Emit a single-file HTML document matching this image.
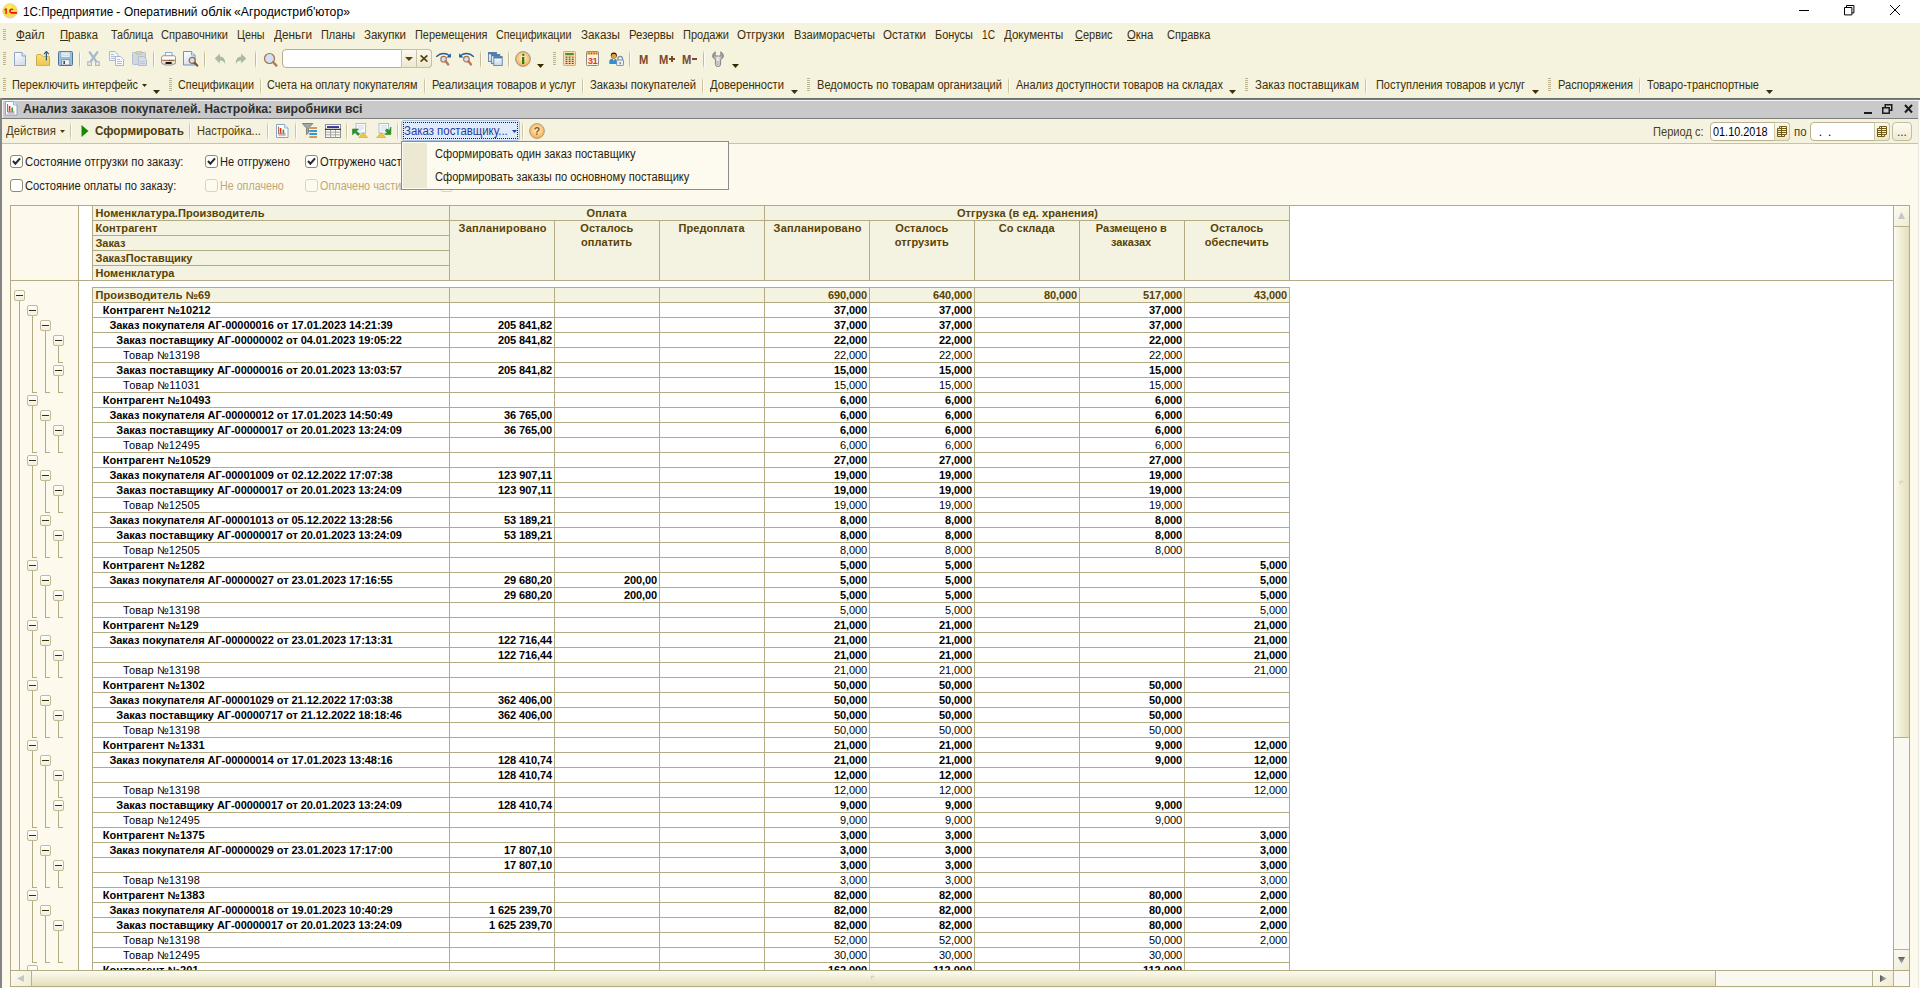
<!DOCTYPE html>
<html><head><meta charset="utf-8"><title>1C</title>
<style>
html,body{margin:0;padding:0}
body{width:1920px;height:988px;position:relative;overflow:hidden;background:#fdf9ec;font-family:"Liberation Sans",sans-serif;font-size:11px;line-height:14px;color:#000}
body div,body span,body svg{position:absolute}
.t{white-space:pre;height:14px}
.b{font-weight:700}
u{text-decoration:none;border-bottom:1px solid currentColor;display:inline-block;height:13px;line-height:16px;vertical-align:top}

</style></head>
<body>
<div style="left:0px;top:0px;width:1920px;height:23px;background:#ffffff;"></div>
<span class="t" style="top:4px;left:22.8px;font-size:12px;line-height:16px;transform:scaleX(0.9747);transform-origin:0 0;">1С:Предприятие</span>
<span class="t" style="top:4px;left:116.1px;font-size:12px;line-height:16px;transform:scaleX(1.1000);transform-origin:0 0;">-</span>
<span class="t" style="top:4px;left:123.8px;font-size:12px;line-height:16px;transform:scaleX(0.9905);transform-origin:0 0;">Оперативний</span>
<span class="t" style="top:4px;left:200.8px;font-size:12px;line-height:16px;transform:scaleX(1.0810);transform-origin:0 0;">облік</span>
<span class="t" style="top:4px;left:233.8px;font-size:12px;line-height:16px;transform:scaleX(1.0175);transform-origin:0 0;">«Агродистриб'ютор»</span>
<svg style="left:1790px;top:0;width:120px;height:23px" viewBox="0 0 120 23" fill="none" stroke="#000" stroke-width="1"><path d="M9 10.5h10"/><path d="M54.5 7.500h7.400v7.400h-7.400z"/><path d="M56.500 7.500v-2h7.400v7.400h-2"/><path d="M100 5l10 10M110 5l-10 10"/></svg>
<div style="left:0px;top:23px;width:1920px;height:75px;background:#f5f2dd;"></div>
<div style="left:3px;top:29px;width:3px;height:11px;background:repeating-linear-gradient(to bottom,#bdb58e 0,#bdb58e 1px,transparent 1px,transparent 2px)"></div>
<span class="t" style="top:27px;left:16.4px;font-size:12px;line-height:16px;color:#3a2f0c;transform:scaleX(0.9656);transform-origin:0 0;"><u>Ф</u>айл</span>
<span class="t" style="top:27px;left:59.9px;font-size:12px;line-height:16px;color:#3a2f0c;transform:scaleX(0.9372);transform-origin:0 0;"><u>П</u>равка</span>
<span class="t" style="top:27px;left:110.6px;font-size:12px;line-height:16px;color:#3a2f0c;transform:scaleX(0.8988);transform-origin:0 0;">Таблица</span>
<span class="t" style="top:27px;left:160.9px;font-size:12px;line-height:16px;color:#3a2f0c;transform:scaleX(0.9216);transform-origin:0 0;">Справочники</span>
<span class="t" style="top:27px;left:237.4px;font-size:12px;line-height:16px;color:#3a2f0c;transform:scaleX(0.8925);transform-origin:0 0;">Цены</span>
<span class="t" style="top:27px;left:273.9px;font-size:12px;line-height:16px;color:#3a2f0c;transform:scaleX(0.9802);transform-origin:0 0;">Деньги</span>
<span class="t" style="top:27px;left:320.9px;font-size:12px;line-height:16px;color:#3a2f0c;transform:scaleX(0.9052);transform-origin:0 0;">Планы</span>
<span class="t" style="top:27px;left:363.9px;font-size:12px;line-height:16px;color:#3a2f0c;transform:scaleX(0.9597);transform-origin:0 0;">Закупки</span>
<span class="t" style="top:27px;left:415.4px;font-size:12px;line-height:16px;color:#3a2f0c;transform:scaleX(0.9084);transform-origin:0 0;">Перемещения</span>
<span class="t" style="top:27px;left:496.4px;font-size:12px;line-height:16px;color:#3a2f0c;transform:scaleX(0.8938);transform-origin:0 0;">Спецификации</span>
<span class="t" style="top:27px;left:580.9px;font-size:12px;line-height:16px;color:#3a2f0c;transform:scaleX(0.9723);transform-origin:0 0;">Заказы</span>
<span class="t" style="top:27px;left:628.9px;font-size:12px;line-height:16px;color:#3a2f0c;transform:scaleX(0.9452);transform-origin:0 0;">Резервы</span>
<span class="t" style="top:27px;left:682.9px;font-size:12px;line-height:16px;color:#3a2f0c;transform:scaleX(0.9177);transform-origin:0 0;">Продажи</span>
<span class="t" style="top:27px;left:737.4px;font-size:12px;line-height:16px;color:#3a2f0c;transform:scaleX(0.9654);transform-origin:0 0;">Отгрузки</span>
<span class="t" style="top:27px;left:793.9px;font-size:12px;line-height:16px;color:#3a2f0c;transform:scaleX(0.9239);transform-origin:0 0;">Взаиморасчеты</span>
<span class="t" style="top:27px;left:882.9px;font-size:12px;line-height:16px;color:#3a2f0c;transform:scaleX(0.9649);transform-origin:0 0;">Остатки</span>
<span class="t" style="top:27px;left:935.2px;font-size:12px;line-height:16px;color:#3a2f0c;transform:scaleX(0.9095);transform-origin:0 0;">Бонусы</span>
<span class="t" style="top:27px;left:982.4px;font-size:12px;line-height:16px;color:#3a2f0c;transform:scaleX(0.8473);transform-origin:0 0;">1С</span>
<span class="t" style="top:27px;left:1003.7px;font-size:12px;line-height:16px;color:#3a2f0c;transform:scaleX(0.9602);transform-origin:0 0;">Документы</span>
<span class="t" style="top:27px;left:1074.6px;font-size:12px;line-height:16px;color:#3a2f0c;transform:scaleX(0.9150);transform-origin:0 0;"><u>С</u>ервис</span>
<span class="t" style="top:27px;left:1126.6px;font-size:12px;line-height:16px;color:#3a2f0c;transform:scaleX(0.9430);transform-origin:0 0;"><u>О</u>кна</span>
<span class="t" style="top:27px;left:1167.4px;font-size:12px;line-height:16px;color:#3a2f0c;transform:scaleX(0.9240);transform-origin:0 0;">Сп<u>р</u>авка</span>
<div style="left:3px;top:78px;width:3px;height:13px;background:repeating-linear-gradient(to bottom,#bdb58e 0,#bdb58e 1px,transparent 1px,transparent 2px)"></div>
<span class="t" style="top:77px;left:12.4px;font-size:12px;line-height:16px;color:#3a2f0c;transform:scaleX(0.9050);transform-origin:0 0;">Переключить интерфейс</span>
<svg style="left:142px;top:84px;width:5px;height:3px" viewBox="0 0 5 3"><path d="M0 0h5l-2.5 3z" fill="#3a2f0c"/></svg>
<svg style="left:153px;top:90px;width:7px;height:4px" viewBox="0 0 7 4"><path d="M0 0h7l-3.5 4z" fill="#3a2f0c"/></svg>
<div style="left:169px;top:78px;width:3px;height:13px;background:repeating-linear-gradient(to bottom,#bdb58e 0,#bdb58e 1px,transparent 1px,transparent 2px)"></div>
<span class="t" style="top:77px;left:177.9px;font-size:12px;line-height:16px;color:#3a2f0c;transform:scaleX(0.8997);transform-origin:0 0;">Спецификации</span>
<div style="left:260px;top:77px;width:1px;height:18px;background:linear-gradient(to bottom,rgba(196,188,150,0),#cbc4a0 25%,#cbc4a0 75%,rgba(196,188,150,0))"></div>
<div style="left:261px;top:77px;width:1px;height:18px;background:linear-gradient(to bottom,rgba(255,255,255,0),#fdfcf6 25%,#fdfcf6 75%,rgba(255,255,255,0))"></div>
<span class="t" style="top:77px;left:267.4px;font-size:12px;line-height:16px;color:#3a2f0c;transform:scaleX(0.9095);transform-origin:0 0;">Счета на оплату покупателям</span>
<div style="left:424px;top:77px;width:1px;height:18px;background:linear-gradient(to bottom,rgba(196,188,150,0),#cbc4a0 25%,#cbc4a0 75%,rgba(196,188,150,0))"></div>
<div style="left:425px;top:77px;width:1px;height:18px;background:linear-gradient(to bottom,rgba(255,255,255,0),#fdfcf6 25%,#fdfcf6 75%,rgba(255,255,255,0))"></div>
<span class="t" style="top:77px;left:431.9px;font-size:12px;line-height:16px;color:#3a2f0c;transform:scaleX(0.9148);transform-origin:0 0;">Реализация товаров и услуг</span>
<div style="left:582px;top:77px;width:1px;height:18px;background:linear-gradient(to bottom,rgba(196,188,150,0),#cbc4a0 25%,#cbc4a0 75%,rgba(196,188,150,0))"></div>
<div style="left:583px;top:77px;width:1px;height:18px;background:linear-gradient(to bottom,rgba(255,255,255,0),#fdfcf6 25%,#fdfcf6 75%,rgba(255,255,255,0))"></div>
<span class="t" style="top:77px;left:589.9px;font-size:12px;line-height:16px;color:#3a2f0c;transform:scaleX(0.9387);transform-origin:0 0;">Заказы покупателей</span>
<div style="left:702px;top:77px;width:1px;height:18px;background:linear-gradient(to bottom,rgba(196,188,150,0),#cbc4a0 25%,#cbc4a0 75%,rgba(196,188,150,0))"></div>
<div style="left:703px;top:77px;width:1px;height:18px;background:linear-gradient(to bottom,rgba(255,255,255,0),#fdfcf6 25%,#fdfcf6 75%,rgba(255,255,255,0))"></div>
<span class="t" style="top:77px;left:709.9px;font-size:12px;line-height:16px;color:#3a2f0c;transform:scaleX(0.9328);transform-origin:0 0;">Доверенности</span>
<svg style="left:791px;top:90px;width:7px;height:4px" viewBox="0 0 7 4"><path d="M0 0h7l-3.5 4z" fill="#3a2f0c"/></svg>
<div style="left:807px;top:78px;width:3px;height:13px;background:repeating-linear-gradient(to bottom,#bdb58e 0,#bdb58e 1px,transparent 1px,transparent 2px)"></div>
<span class="t" style="top:77px;left:816.9px;font-size:12px;line-height:16px;color:#3a2f0c;transform:scaleX(0.9231);transform-origin:0 0;">Ведомость по товарам организаций</span>
<div style="left:1008px;top:77px;width:1px;height:18px;background:linear-gradient(to bottom,rgba(196,188,150,0),#cbc4a0 25%,#cbc4a0 75%,rgba(196,188,150,0))"></div>
<div style="left:1009px;top:77px;width:1px;height:18px;background:linear-gradient(to bottom,rgba(255,255,255,0),#fdfcf6 25%,#fdfcf6 75%,rgba(255,255,255,0))"></div>
<span class="t" style="top:77px;left:1015.9px;font-size:12px;line-height:16px;color:#3a2f0c;transform:scaleX(0.9164);transform-origin:0 0;">Анализ доступности товаров на складах</span>
<svg style="left:1229px;top:90px;width:7px;height:4px" viewBox="0 0 7 4"><path d="M0 0h7l-3.5 4z" fill="#3a2f0c"/></svg>
<div style="left:1245px;top:78px;width:3px;height:13px;background:repeating-linear-gradient(to bottom,#bdb58e 0,#bdb58e 1px,transparent 1px,transparent 2px)"></div>
<span class="t" style="top:77px;left:1254.9px;font-size:12px;line-height:16px;color:#3a2f0c;transform:scaleX(0.9506);transform-origin:0 0;">Заказ поставщикам</span>
<div style="left:1365px;top:77px;width:1px;height:18px;background:linear-gradient(to bottom,rgba(196,188,150,0),#cbc4a0 25%,#cbc4a0 75%,rgba(196,188,150,0))"></div>
<div style="left:1366px;top:77px;width:1px;height:18px;background:linear-gradient(to bottom,rgba(255,255,255,0),#fdfcf6 25%,#fdfcf6 75%,rgba(255,255,255,0))"></div>
<span class="t" style="top:77px;left:1375.9px;font-size:12px;line-height:16px;color:#3a2f0c;transform:scaleX(0.9110);transform-origin:0 0;">Поступления товаров и услуг</span>
<svg style="left:1532px;top:90px;width:7px;height:4px" viewBox="0 0 7 4"><path d="M0 0h7l-3.5 4z" fill="#3a2f0c"/></svg>
<div style="left:1548px;top:78px;width:3px;height:13px;background:repeating-linear-gradient(to bottom,#bdb58e 0,#bdb58e 1px,transparent 1px,transparent 2px)"></div>
<span class="t" style="top:77px;left:1557.9px;font-size:12px;line-height:16px;color:#3a2f0c;transform:scaleX(0.9256);transform-origin:0 0;">Распоряжения</span>
<div style="left:1639px;top:77px;width:1px;height:18px;background:linear-gradient(to bottom,rgba(196,188,150,0),#cbc4a0 25%,#cbc4a0 75%,rgba(196,188,150,0))"></div>
<div style="left:1640px;top:77px;width:1px;height:18px;background:linear-gradient(to bottom,rgba(255,255,255,0),#fdfcf6 25%,#fdfcf6 75%,rgba(255,255,255,0))"></div>
<span class="t" style="top:77px;left:1646.9px;font-size:12px;line-height:16px;color:#3a2f0c;transform:scaleX(0.9194);transform-origin:0 0;">Товаро-транспортные</span>
<svg style="left:1766px;top:90px;width:7px;height:4px" viewBox="0 0 7 4"><path d="M0 0h7l-3.5 4z" fill="#3a2f0c"/></svg>
<div style="left:0px;top:98px;width:1920px;height:1px;background:#6c6c6c;"></div>
<div style="left:0px;top:99px;width:1920px;height:1px;background:#7e7e7e;"></div>
<div style="left:0px;top:100px;width:1920px;height:1px;background:#f4f4f4;"></div>
<div style="left:0px;top:101px;width:1918px;height:17px;background:#c9c9c9;"></div>
<div style="left:0px;top:118px;width:1918px;height:1px;background:#7d7d7d;"></div>
<div style="left:0px;top:119px;width:1918px;height:24px;background:#f5f2e0;"></div>
<div style="left:0px;top:143px;width:1918px;height:1px;background:#c9c29c;"></div>
<div style="left:0px;top:98px;width:2px;height:890px;background:#858585;"></div>
<div style="left:2px;top:101px;width:1px;height:17px;background:#f4f4f4;"></div>
<div style="left:1918px;top:100px;width:1px;height:888px;background:#e9e9e4;"></div>
<div style="left:1919px;top:100px;width:1px;height:888px;background:#fbfbf8;"></div>
<div style="left:2px;top:987px;width:1916px;height:1px;background:#fdf9ec;"></div>
<span class="t b" style="top:101px;left:22.9px;font-size:12px;line-height:16px;color:#2e2e2e;transform:scaleX(1.0195);transform-origin:0 0;">Анализ заказов покупателей. Настройка: виробники всі</span>
<svg style="left:1860px;top:101px;width:58px;height:17px" viewBox="0 0 58 17" fill="none" stroke="#1a1a1a"><path d="M4 12h8" stroke-width="2"/><path d="M22.75 6.75h6.5v5.5h-6.5z M25.25 6v-2.25h6.5v5.5h-2" stroke-width="1.5"/><path d="M45 4l7 7.5M52 4l-7 7.5" stroke-width="2"/></svg>
<span class="t" style="top:123px;left:6.2px;font-size:12px;line-height:16px;color:#4d3e10;transform:scaleX(0.9491);transform-origin:0 0;">Действия</span>
<svg style="left:60px;top:130px;width:5px;height:3px" viewBox="0 0 5 3"><path d="M0 0h5l-2.5 3z" fill="#4d3e10"/></svg>
<div style="left:70px;top:121px;width:1px;height:20px;background:linear-gradient(to bottom,rgba(196,188,150,0),#cdc6a4 25%,#cdc6a4 75%,rgba(196,188,150,0))"></div>
<div style="left:71px;top:121px;width:1px;height:20px;background:linear-gradient(to bottom,rgba(255,255,255,0),#fffefa 25%,#fffefa 75%,rgba(255,255,255,0))"></div>
<svg style="left:81px;top:124px;width:8px;height:14px" viewBox="0 0 8 14"><path d="M0.5 1v12l7-6z" fill="#168a00"/></svg>
<span class="t b" style="top:123px;left:94.6px;font-size:12px;line-height:16px;color:#4d3e10;transform:scaleX(0.9724);transform-origin:0 0;">Сформировать</span>
<div style="left:189px;top:121px;width:1px;height:20px;background:linear-gradient(to bottom,rgba(196,188,150,0),#cdc6a4 25%,#cdc6a4 75%,rgba(196,188,150,0))"></div>
<div style="left:190px;top:121px;width:1px;height:20px;background:linear-gradient(to bottom,rgba(255,255,255,0),#fffefa 25%,#fffefa 75%,rgba(255,255,255,0))"></div>
<span class="t" style="top:123px;left:197.1px;font-size:12px;line-height:16px;color:#4d3e10;transform:scaleX(0.9236);transform-origin:0 0;">Настройка...</span>
<div style="left:267px;top:121px;width:1px;height:20px;background:linear-gradient(to bottom,rgba(196,188,150,0),#cdc6a4 25%,#cdc6a4 75%,rgba(196,188,150,0))"></div>
<div style="left:268px;top:121px;width:1px;height:20px;background:linear-gradient(to bottom,rgba(255,255,255,0),#fffefa 25%,#fffefa 75%,rgba(255,255,255,0))"></div>
<div style="left:295px;top:121px;width:1px;height:20px;background:linear-gradient(to bottom,rgba(196,188,150,0),#cdc6a4 25%,#cdc6a4 75%,rgba(196,188,150,0))"></div>
<div style="left:296px;top:121px;width:1px;height:20px;background:linear-gradient(to bottom,rgba(255,255,255,0),#fffefa 25%,#fffefa 75%,rgba(255,255,255,0))"></div>
<div style="left:346px;top:121px;width:1px;height:20px;background:linear-gradient(to bottom,rgba(196,188,150,0),#cdc6a4 25%,#cdc6a4 75%,rgba(196,188,150,0))"></div>
<div style="left:347px;top:121px;width:1px;height:20px;background:linear-gradient(to bottom,rgba(255,255,255,0),#fffefa 25%,#fffefa 75%,rgba(255,255,255,0))"></div>
<div style="left:397px;top:121px;width:1px;height:20px;background:linear-gradient(to bottom,rgba(196,188,150,0),#cdc6a4 25%,#cdc6a4 75%,rgba(196,188,150,0))"></div>
<div style="left:398px;top:121px;width:1px;height:20px;background:linear-gradient(to bottom,rgba(255,255,255,0),#fffefa 25%,#fffefa 75%,rgba(255,255,255,0))"></div>
<div style="left:522px;top:121px;width:1px;height:20px;background:linear-gradient(to bottom,rgba(196,188,150,0),#cdc6a4 25%,#cdc6a4 75%,rgba(196,188,150,0))"></div>
<div style="left:523px;top:121px;width:1px;height:20px;background:linear-gradient(to bottom,rgba(255,255,255,0),#fffefa 25%,#fffefa 75%,rgba(255,255,255,0))"></div>
<div style="left:401px;top:120px;width:119px;height:21px;border:1px solid #aac4e8;border-radius:3px;box-sizing:border-box;background:#dfeafa"></div>
<div style="left:403px;top:122px;width:115px;height:17px;border:1px dotted #1a1a3a;box-sizing:border-box"></div>
<span class="t" style="top:123px;left:403.9px;font-size:12px;line-height:16px;color:#2a3c9c;transform:scaleX(0.9509);transform-origin:0 0;">Заказ поставщику...</span>
<svg style="left:512px;top:130px;width:5px;height:3px" viewBox="0 0 5 3"><path d="M0 0h5l-2.5 3z" fill="#2a3c9c"/></svg>
<span class="t" style="top:124px;left:1653.0px;font-size:12px;line-height:16px;color:#4d3e10;transform:scaleX(0.9239);transform-origin:0 0;">Период с:</span>
<div style="left:1710px;top:122px;width:80px;height:19px;border:1px solid #b9b18c;border-radius:4px;box-sizing:border-box;background:#fff"></div>
<div style="left:1774px;top:122px;width:16px;height:19px;border:1px solid #c8c19e;border-left-color:#cfc9a8;border-radius:0 4px 4px 0;box-sizing:border-box;background:linear-gradient(#fbf9ee,#ece7cd)"></div>
<svg style="left:1777px;top:126px;width:10px;height:11px" viewBox="0 0 10 11" fill="none" stroke="#6e5a14" stroke-width="1"><path d="M2.500 0.500h7v8h-2v2h-7v-8h2z M0.500 4.500h9M0.500 6.500h9M0.500 8.500h7M2.500 2.500h7 M4.500 0.500v10"/></svg>
<span class="t" style="top:124px;left:1713.3px;font-size:12px;line-height:16px;transform:scaleX(0.9074);transform-origin:0 0;">01.10.2018</span>
<span class="t" style="top:124px;left:1793.5px;font-size:12px;line-height:16px;color:#4d3e10;transform:scaleX(0.9566);transform-origin:0 0;">по</span>
<div style="left:1810px;top:122px;width:80px;height:19px;border:1px solid #b9b18c;border-radius:4px;box-sizing:border-box;background:#fff"></div>
<div style="left:1874px;top:122px;width:16px;height:19px;border:1px solid #c8c19e;border-left-color:#cfc9a8;border-radius:0 4px 4px 0;box-sizing:border-box;background:linear-gradient(#fbf9ee,#ece7cd)"></div>
<svg style="left:1877px;top:126px;width:10px;height:11px" viewBox="0 0 10 11" fill="none" stroke="#6e5a14" stroke-width="1"><path d="M2.500 0.500h7v8h-2v2h-7v-8h2z M0.500 4.500h9M0.500 6.500h9M0.500 8.500h7M2.500 2.500h7 M4.500 0.500v10"/></svg>
<span class="t" style="top:124px;left:1818.7px;font-size:12px;line-height:16px;">.</span>
<span class="t" style="top:124px;left:1827.9px;font-size:12px;line-height:16px;">.</span>
<div style="left:1892px;top:122px;width:20px;height:19px;border:1px solid #c4bd9a;border-radius:4px;box-sizing:border-box;background:linear-gradient(#fdfcf4,#eeead2)"></div>
<span class="t" style="top:124px;left:1896.9px;font-size:12px;line-height:16px;color:#4d3e10;">...</span>
<div style="left:10px;top:155px;width:13px;height:13px;border:1px solid #8f8a76;border-radius:3px;box-sizing:border-box;background:#fff"></div>
<svg style="left:12px;top:157px;width:9px;height:9px" viewBox="0 0 9 9"><path d="M1 4l2.400 2.700L8 1.400" fill="none" stroke="#2a2a2a" stroke-width="2.100"/></svg>
<span class="t" style="top:154px;left:24.6px;font-size:12px;line-height:16px;color:#1c1c1c;transform:scaleX(0.9420);transform-origin:0 0;">Состояние отгрузки по заказу:</span>
<div style="left:205px;top:155px;width:13px;height:13px;border:1px solid #8f8a76;border-radius:3px;box-sizing:border-box;background:#fff"></div>
<svg style="left:207px;top:157px;width:9px;height:9px" viewBox="0 0 9 9"><path d="M1 4l2.400 2.700L8 1.400" fill="none" stroke="#2a2a2a" stroke-width="2.100"/></svg>
<span class="t" style="top:154px;left:220.1px;font-size:12px;line-height:16px;color:#1c1c1c;transform:scaleX(0.9228);transform-origin:0 0;">Не отгружено</span>
<div style="left:305px;top:155px;width:13px;height:13px;border:1px solid #8f8a76;border-radius:3px;box-sizing:border-box;background:#fff"></div>
<svg style="left:307px;top:157px;width:9px;height:9px" viewBox="0 0 9 9"><path d="M1 4l2.400 2.700L8 1.400" fill="none" stroke="#2a2a2a" stroke-width="2.100"/></svg>
<span class="t" style="top:154px;left:319.9px;font-size:12px;line-height:16px;color:#1c1c1c;transform:scaleX(0.9306);transform-origin:0 0;">Отгружено частично</span>
<div style="left:10px;top:179px;width:13px;height:13px;border:1px solid #8f8a76;border-radius:3px;box-sizing:border-box;background:#fff"></div>
<span class="t" style="top:178px;left:24.6px;font-size:12px;line-height:16px;color:#1c1c1c;transform:scaleX(0.9300);transform-origin:0 0;">Состояние оплаты по заказу:</span>
<div style="left:205px;top:179px;width:13px;height:13px;border:1px solid #d9d5c4;border-radius:3px;box-sizing:border-box;background:#fdfaee"></div>
<span class="t" style="top:178px;left:220.1px;font-size:12px;line-height:16px;color:#bda878;transform:scaleX(0.8925);transform-origin:0 0;">Не оплачено</span>
<div style="left:305px;top:179px;width:13px;height:13px;border:1px solid #d9d5c4;border-radius:3px;box-sizing:border-box;background:#fdfaee"></div>
<span class="t" style="top:178px;left:319.9px;font-size:12px;line-height:16px;color:#bda878;transform:scaleX(0.9042);transform-origin:0 0;">Оплачено частично</span>
<div style="left:440px;top:179px;width:13px;height:13px;border:1px solid #d9d5c4;border-radius:3px;box-sizing:border-box;background:#fdfaee"></div>
<div style="left:10px;top:205px;width:1900px;height:782px;border:1px solid #b3ab84;box-sizing:border-box;background:#fff"></div>
<div style="left:11px;top:206px;width:67px;height:764px;background:#fdf9ec;"></div>
<div style="left:78px;top:206px;width:1px;height:764px;background:#b3ab84;"></div>
<div style="left:11px;top:280px;width:1882px;height:1px;background:#b3ab84;"></div>
<div style="left:92px;top:205px;width:1198px;height:76px;background:#f4f2e0;"></div>
<div style="left:92px;top:205px;width:1198px;height:1px;background:#b3ab84;"></div>
<div style="left:92px;top:220px;width:1198px;height:1px;background:#b3ab84;"></div>
<div style="left:92px;top:235px;width:357px;height:1px;background:#b3ab84;"></div>
<div style="left:92px;top:250px;width:357px;height:1px;background:#b3ab84;"></div>
<div style="left:92px;top:265px;width:357px;height:1px;background:#b3ab84;"></div>
<div style="left:92px;top:280px;width:1198px;height:1px;background:#b3ab84;"></div>
<div style="left:92px;top:205px;width:1px;height:76px;background:#b3ab84;"></div>
<div style="left:449px;top:205px;width:1px;height:76px;background:#b3ab84;"></div>
<div style="left:764px;top:205px;width:1px;height:76px;background:#b3ab84;"></div>
<div style="left:1289px;top:205px;width:1px;height:76px;background:#b3ab84;"></div>
<div style="left:554px;top:220px;width:1px;height:61px;background:#b3ab84;"></div>
<div style="left:659px;top:220px;width:1px;height:61px;background:#b3ab84;"></div>
<div style="left:869px;top:220px;width:1px;height:61px;background:#b3ab84;"></div>
<div style="left:974px;top:220px;width:1px;height:61px;background:#b3ab84;"></div>
<div style="left:1079px;top:220px;width:1px;height:61px;background:#b3ab84;"></div>
<div style="left:1184px;top:220px;width:1px;height:61px;background:#b3ab84;"></div>
<span class="t b" style="top:206px;left:95.5px;color:#594304;letter-spacing:0.059px;">Номенклатура.Производитель</span>
<span class="t b" style="top:221px;left:95.5px;color:#594304;letter-spacing:0.095px;">Контрагент</span>
<span class="t b" style="top:236px;left:95.5px;color:#594304;letter-spacing:-0.047px;">Заказ</span>
<span class="t b" style="top:251px;left:95.5px;color:#594304;letter-spacing:0.016px;">ЗаказПоставщику</span>
<span class="t b" style="top:266px;left:95.5px;color:#594304;letter-spacing:0.030px;">Номенклатура</span>
<span class="t b" style="top:206px;left:586.6px;color:#594304;letter-spacing:0.031px;">Оплата</span>
<span class="t b" style="top:206px;left:956.9px;color:#594304;letter-spacing:0.075px;">Отгрузка (в ед. хранения)</span>
<span class="t b" style="top:221px;left:458.6px;color:#594304;letter-spacing:0.177px;">Запланировано</span>
<span class="t b" style="top:221px;left:580.3px;color:#594304;letter-spacing:0.064px;">Осталось</span>
<span class="t b" style="top:235px;left:581.1px;color:#594304;letter-spacing:0.027px;">оплатить</span>
<span class="t b" style="top:221px;left:678.6px;color:#594304;letter-spacing:0.030px;">Предоплата</span>
<span class="t b" style="top:221px;left:773.6px;color:#594304;letter-spacing:0.177px;">Запланировано</span>
<span class="t b" style="top:221px;left:895.3px;color:#594304;letter-spacing:0.064px;">Осталось</span>
<span class="t b" style="top:235px;left:894.8px;color:#594304;letter-spacing:0.073px;">отгрузить</span>
<span class="t b" style="top:221px;left:998.7px;color:#594304;letter-spacing:0.035px;">Со склада</span>
<span class="t b" style="top:221px;left:1095.8px;color:#594304;letter-spacing:-0.044px;">Размещено в</span>
<span class="t b" style="top:235px;left:1111.1px;color:#594304;letter-spacing:-0.109px;">заказах</span>
<span class="t b" style="top:221px;left:1210.3px;color:#594304;letter-spacing:0.064px;">Осталось</span>
<span class="t b" style="top:235px;left:1204.8px;color:#594304;letter-spacing:0.061px;">обеспечить</span>
<div style="left:11px;top:281px;width:1882px;height:689px;overflow:hidden">
<div style="left:81px;top:6px;width:1198px;height:16px;background:#f4f2e0;"></div>
<div style="left:81px;top:6px;width:1198px;height:1px;background:#b3ab84;"></div>
<div style="left:81px;top:21px;width:1198px;height:1px;background:#b3ab84;"></div>
<div style="left:81px;top:36px;width:1198px;height:1px;background:#b3ab84;"></div>
<div style="left:81px;top:51px;width:1198px;height:1px;background:#b3ab84;"></div>
<div style="left:81px;top:66px;width:1198px;height:1px;background:#b3ab84;"></div>
<div style="left:81px;top:81px;width:1198px;height:1px;background:#b3ab84;"></div>
<div style="left:81px;top:96px;width:1198px;height:1px;background:#b3ab84;"></div>
<div style="left:81px;top:111px;width:1198px;height:1px;background:#b3ab84;"></div>
<div style="left:81px;top:126px;width:1198px;height:1px;background:#b3ab84;"></div>
<div style="left:81px;top:141px;width:1198px;height:1px;background:#b3ab84;"></div>
<div style="left:81px;top:156px;width:1198px;height:1px;background:#b3ab84;"></div>
<div style="left:81px;top:171px;width:1198px;height:1px;background:#b3ab84;"></div>
<div style="left:81px;top:186px;width:1198px;height:1px;background:#b3ab84;"></div>
<div style="left:81px;top:201px;width:1198px;height:1px;background:#b3ab84;"></div>
<div style="left:81px;top:216px;width:1198px;height:1px;background:#b3ab84;"></div>
<div style="left:81px;top:231px;width:1198px;height:1px;background:#b3ab84;"></div>
<div style="left:81px;top:246px;width:1198px;height:1px;background:#b3ab84;"></div>
<div style="left:81px;top:261px;width:1198px;height:1px;background:#b3ab84;"></div>
<div style="left:81px;top:276px;width:1198px;height:1px;background:#b3ab84;"></div>
<div style="left:81px;top:291px;width:1198px;height:1px;background:#b3ab84;"></div>
<div style="left:81px;top:306px;width:1198px;height:1px;background:#b3ab84;"></div>
<div style="left:81px;top:321px;width:1198px;height:1px;background:#b3ab84;"></div>
<div style="left:81px;top:336px;width:1198px;height:1px;background:#b3ab84;"></div>
<div style="left:81px;top:351px;width:1198px;height:1px;background:#b3ab84;"></div>
<div style="left:81px;top:366px;width:1198px;height:1px;background:#b3ab84;"></div>
<div style="left:81px;top:381px;width:1198px;height:1px;background:#b3ab84;"></div>
<div style="left:81px;top:396px;width:1198px;height:1px;background:#b3ab84;"></div>
<div style="left:81px;top:411px;width:1198px;height:1px;background:#b3ab84;"></div>
<div style="left:81px;top:426px;width:1198px;height:1px;background:#b3ab84;"></div>
<div style="left:81px;top:441px;width:1198px;height:1px;background:#b3ab84;"></div>
<div style="left:81px;top:456px;width:1198px;height:1px;background:#b3ab84;"></div>
<div style="left:81px;top:471px;width:1198px;height:1px;background:#b3ab84;"></div>
<div style="left:81px;top:486px;width:1198px;height:1px;background:#b3ab84;"></div>
<div style="left:81px;top:501px;width:1198px;height:1px;background:#b3ab84;"></div>
<div style="left:81px;top:516px;width:1198px;height:1px;background:#b3ab84;"></div>
<div style="left:81px;top:531px;width:1198px;height:1px;background:#b3ab84;"></div>
<div style="left:81px;top:546px;width:1198px;height:1px;background:#b3ab84;"></div>
<div style="left:81px;top:561px;width:1198px;height:1px;background:#b3ab84;"></div>
<div style="left:81px;top:576px;width:1198px;height:1px;background:#b3ab84;"></div>
<div style="left:81px;top:591px;width:1198px;height:1px;background:#b3ab84;"></div>
<div style="left:81px;top:606px;width:1198px;height:1px;background:#b3ab84;"></div>
<div style="left:81px;top:621px;width:1198px;height:1px;background:#b3ab84;"></div>
<div style="left:81px;top:636px;width:1198px;height:1px;background:#b3ab84;"></div>
<div style="left:81px;top:651px;width:1198px;height:1px;background:#b3ab84;"></div>
<div style="left:81px;top:666px;width:1198px;height:1px;background:#b3ab84;"></div>
<div style="left:81px;top:681px;width:1198px;height:1px;background:#b3ab84;"></div>
<div style="left:81px;top:696px;width:1198px;height:1px;background:#b3ab84;"></div>
<div style="left:81px;top:6px;width:1px;height:691px;background:#b3ab84;"></div>
<div style="left:438px;top:6px;width:1px;height:691px;background:#b3ab84;"></div>
<div style="left:543px;top:6px;width:1px;height:691px;background:#b3ab84;"></div>
<div style="left:648px;top:6px;width:1px;height:691px;background:#b3ab84;"></div>
<div style="left:753px;top:6px;width:1px;height:691px;background:#b3ab84;"></div>
<div style="left:858px;top:6px;width:1px;height:691px;background:#b3ab84;"></div>
<div style="left:963px;top:6px;width:1px;height:691px;background:#b3ab84;"></div>
<div style="left:1068px;top:6px;width:1px;height:691px;background:#b3ab84;"></div>
<div style="left:1173px;top:6px;width:1px;height:691px;background:#b3ab84;"></div>
<div style="left:1278px;top:6px;width:1px;height:691px;background:#b3ab84;"></div>
<span class="t b" style="left:84.5px;top:7px;letter-spacing:0.098px;color:#594304;">Производитель №69</span>
<span class="t b" style="right:1026.0px;top:7px;letter-spacing:-0.109px;color:#594304;">690,000</span>
<span class="t b" style="right:921.0px;top:7px;letter-spacing:-0.109px;color:#594304;">640,000</span>
<span class="t b" style="right:816.0px;top:7px;letter-spacing:-0.109px;color:#594304;">80,000</span>
<span class="t b" style="right:711.0px;top:7px;letter-spacing:-0.109px;color:#594304;">517,000</span>
<span class="t b" style="right:606.0px;top:7px;letter-spacing:-0.109px;color:#594304;">43,000</span>
<span class="t b" style="left:91.7px;top:22px;letter-spacing:0.062px;">Контрагент №10212</span>
<span class="t b" style="right:1026.0px;top:22px;letter-spacing:-0.109px;">37,000</span>
<span class="t b" style="right:921.0px;top:22px;letter-spacing:-0.109px;">37,000</span>
<span class="t b" style="right:711.0px;top:22px;letter-spacing:-0.109px;">37,000</span>
<span class="t b" style="left:98.4px;top:37px;letter-spacing:-0.051px;">Заказ покупателя АГ-00000016 от 17.01.2023 14:21:39</span>
<span class="t b" style="right:1341.0px;top:37px;letter-spacing:-0.106px;">205 841,82</span>
<span class="t b" style="right:1026.0px;top:37px;letter-spacing:-0.109px;">37,000</span>
<span class="t b" style="right:921.0px;top:37px;letter-spacing:-0.109px;">37,000</span>
<span class="t b" style="right:711.0px;top:37px;letter-spacing:-0.109px;">37,000</span>
<span class="t b" style="left:105.3px;top:52px;letter-spacing:-0.059px;">Заказ поставщику АГ-00000002 от 04.01.2023 19:05:22</span>
<span class="t b" style="right:1341.0px;top:52px;letter-spacing:-0.106px;">205 841,82</span>
<span class="t b" style="right:1026.0px;top:52px;letter-spacing:-0.109px;">22,000</span>
<span class="t b" style="right:921.0px;top:52px;letter-spacing:-0.109px;">22,000</span>
<span class="t b" style="right:711.0px;top:52px;letter-spacing:-0.109px;">22,000</span>
<span class="t" style="left:112.1px;top:67px;letter-spacing:0.134px;">Товар №13198</span>
<span class="t" style="right:1026.0px;top:67px;letter-spacing:-0.109px;">22,000</span>
<span class="t" style="right:921.0px;top:67px;letter-spacing:-0.109px;">22,000</span>
<span class="t" style="right:711.0px;top:67px;letter-spacing:-0.109px;">22,000</span>
<span class="t b" style="left:105.3px;top:82px;letter-spacing:-0.059px;">Заказ поставщику АГ-00000016 от 20.01.2023 13:03:57</span>
<span class="t b" style="right:1341.0px;top:82px;letter-spacing:-0.106px;">205 841,82</span>
<span class="t b" style="right:1026.0px;top:82px;letter-spacing:-0.109px;">15,000</span>
<span class="t b" style="right:921.0px;top:82px;letter-spacing:-0.109px;">15,000</span>
<span class="t b" style="right:711.0px;top:82px;letter-spacing:-0.109px;">15,000</span>
<span class="t" style="left:112.1px;top:97px;letter-spacing:0.203px;">Товар №11031</span>
<span class="t" style="right:1026.0px;top:97px;letter-spacing:-0.109px;">15,000</span>
<span class="t" style="right:921.0px;top:97px;letter-spacing:-0.109px;">15,000</span>
<span class="t" style="right:711.0px;top:97px;letter-spacing:-0.109px;">15,000</span>
<span class="t b" style="left:91.7px;top:112px;letter-spacing:0.062px;">Контрагент №10493</span>
<span class="t b" style="right:1026.0px;top:112px;letter-spacing:-0.106px;">6,000</span>
<span class="t b" style="right:921.0px;top:112px;letter-spacing:-0.106px;">6,000</span>
<span class="t b" style="right:711.0px;top:112px;letter-spacing:-0.106px;">6,000</span>
<span class="t b" style="left:98.4px;top:127px;letter-spacing:-0.051px;">Заказ покупателя АГ-00000012 от 17.01.2023 14:50:49</span>
<span class="t b" style="right:1341.0px;top:127px;letter-spacing:-0.104px;">36 765,00</span>
<span class="t b" style="right:1026.0px;top:127px;letter-spacing:-0.106px;">6,000</span>
<span class="t b" style="right:921.0px;top:127px;letter-spacing:-0.106px;">6,000</span>
<span class="t b" style="right:711.0px;top:127px;letter-spacing:-0.106px;">6,000</span>
<span class="t b" style="left:105.3px;top:142px;letter-spacing:-0.059px;">Заказ поставщику АГ-00000017 от 20.01.2023 13:24:09</span>
<span class="t b" style="right:1341.0px;top:142px;letter-spacing:-0.104px;">36 765,00</span>
<span class="t b" style="right:1026.0px;top:142px;letter-spacing:-0.106px;">6,000</span>
<span class="t b" style="right:921.0px;top:142px;letter-spacing:-0.106px;">6,000</span>
<span class="t b" style="right:711.0px;top:142px;letter-spacing:-0.106px;">6,000</span>
<span class="t" style="left:112.1px;top:157px;letter-spacing:0.134px;">Товар №12495</span>
<span class="t" style="right:1026.0px;top:157px;letter-spacing:-0.106px;">6,000</span>
<span class="t" style="right:921.0px;top:157px;letter-spacing:-0.106px;">6,000</span>
<span class="t" style="right:711.0px;top:157px;letter-spacing:-0.106px;">6,000</span>
<span class="t b" style="left:91.7px;top:172px;letter-spacing:0.062px;">Контрагент №10529</span>
<span class="t b" style="right:1026.0px;top:172px;letter-spacing:-0.109px;">27,000</span>
<span class="t b" style="right:921.0px;top:172px;letter-spacing:-0.109px;">27,000</span>
<span class="t b" style="right:711.0px;top:172px;letter-spacing:-0.109px;">27,000</span>
<span class="t b" style="left:98.4px;top:187px;letter-spacing:-0.051px;">Заказ покупателя АГ-00001009 от 02.12.2022 17:07:38</span>
<span class="t b" style="right:1341.0px;top:187px;letter-spacing:-0.045px;">123 907,11</span>
<span class="t b" style="right:1026.0px;top:187px;letter-spacing:-0.109px;">19,000</span>
<span class="t b" style="right:921.0px;top:187px;letter-spacing:-0.109px;">19,000</span>
<span class="t b" style="right:711.0px;top:187px;letter-spacing:-0.109px;">19,000</span>
<span class="t b" style="left:105.3px;top:202px;letter-spacing:-0.059px;">Заказ поставщику АГ-00000017 от 20.01.2023 13:24:09</span>
<span class="t b" style="right:1341.0px;top:202px;letter-spacing:-0.045px;">123 907,11</span>
<span class="t b" style="right:1026.0px;top:202px;letter-spacing:-0.109px;">19,000</span>
<span class="t b" style="right:921.0px;top:202px;letter-spacing:-0.109px;">19,000</span>
<span class="t b" style="right:711.0px;top:202px;letter-spacing:-0.109px;">19,000</span>
<span class="t" style="left:112.1px;top:217px;letter-spacing:0.134px;">Товар №12505</span>
<span class="t" style="right:1026.0px;top:217px;letter-spacing:-0.109px;">19,000</span>
<span class="t" style="right:921.0px;top:217px;letter-spacing:-0.109px;">19,000</span>
<span class="t" style="right:711.0px;top:217px;letter-spacing:-0.109px;">19,000</span>
<span class="t b" style="left:98.4px;top:232px;letter-spacing:-0.051px;">Заказ покупателя АГ-00001013 от 05.12.2022 13:28:56</span>
<span class="t b" style="right:1341.0px;top:232px;letter-spacing:-0.104px;">53 189,21</span>
<span class="t b" style="right:1026.0px;top:232px;letter-spacing:-0.106px;">8,000</span>
<span class="t b" style="right:921.0px;top:232px;letter-spacing:-0.106px;">8,000</span>
<span class="t b" style="right:711.0px;top:232px;letter-spacing:-0.106px;">8,000</span>
<span class="t b" style="left:105.3px;top:247px;letter-spacing:-0.059px;">Заказ поставщику АГ-00000017 от 20.01.2023 13:24:09</span>
<span class="t b" style="right:1341.0px;top:247px;letter-spacing:-0.104px;">53 189,21</span>
<span class="t b" style="right:1026.0px;top:247px;letter-spacing:-0.106px;">8,000</span>
<span class="t b" style="right:921.0px;top:247px;letter-spacing:-0.106px;">8,000</span>
<span class="t b" style="right:711.0px;top:247px;letter-spacing:-0.106px;">8,000</span>
<span class="t" style="left:112.1px;top:262px;letter-spacing:0.134px;">Товар №12505</span>
<span class="t" style="right:1026.0px;top:262px;letter-spacing:-0.106px;">8,000</span>
<span class="t" style="right:921.0px;top:262px;letter-spacing:-0.106px;">8,000</span>
<span class="t" style="right:711.0px;top:262px;letter-spacing:-0.106px;">8,000</span>
<span class="t b" style="left:91.7px;top:277px;letter-spacing:0.073px;">Контрагент №1282</span>
<span class="t b" style="right:1026.0px;top:277px;letter-spacing:-0.106px;">5,000</span>
<span class="t b" style="right:921.0px;top:277px;letter-spacing:-0.106px;">5,000</span>
<span class="t b" style="right:606.0px;top:277px;letter-spacing:-0.106px;">5,000</span>
<span class="t b" style="left:98.4px;top:292px;letter-spacing:-0.051px;">Заказ покупателя АГ-00000027 от 23.01.2023 17:16:55</span>
<span class="t b" style="right:1341.0px;top:292px;letter-spacing:-0.104px;">29 680,20</span>
<span class="t b" style="right:1236.0px;top:292px;letter-spacing:-0.109px;">200,00</span>
<span class="t b" style="right:1026.0px;top:292px;letter-spacing:-0.106px;">5,000</span>
<span class="t b" style="right:921.0px;top:292px;letter-spacing:-0.106px;">5,000</span>
<span class="t b" style="right:606.0px;top:292px;letter-spacing:-0.106px;">5,000</span>
<span class="t b" style="right:1341.0px;top:307px;letter-spacing:-0.104px;">29 680,20</span>
<span class="t b" style="right:1236.0px;top:307px;letter-spacing:-0.109px;">200,00</span>
<span class="t b" style="right:1026.0px;top:307px;letter-spacing:-0.106px;">5,000</span>
<span class="t b" style="right:921.0px;top:307px;letter-spacing:-0.106px;">5,000</span>
<span class="t b" style="right:606.0px;top:307px;letter-spacing:-0.106px;">5,000</span>
<span class="t" style="left:112.1px;top:322px;letter-spacing:0.134px;">Товар №13198</span>
<span class="t" style="right:1026.0px;top:322px;letter-spacing:-0.106px;">5,000</span>
<span class="t" style="right:921.0px;top:322px;letter-spacing:-0.106px;">5,000</span>
<span class="t" style="right:606.0px;top:322px;letter-spacing:-0.106px;">5,000</span>
<span class="t b" style="left:91.7px;top:337px;letter-spacing:0.086px;">Контрагент №129</span>
<span class="t b" style="right:1026.0px;top:337px;letter-spacing:-0.109px;">21,000</span>
<span class="t b" style="right:921.0px;top:337px;letter-spacing:-0.109px;">21,000</span>
<span class="t b" style="right:606.0px;top:337px;letter-spacing:-0.109px;">21,000</span>
<span class="t b" style="left:98.4px;top:352px;letter-spacing:-0.051px;">Заказ покупателя АГ-00000022 от 23.01.2023 17:13:31</span>
<span class="t b" style="right:1341.0px;top:352px;letter-spacing:-0.106px;">122 716,44</span>
<span class="t b" style="right:1026.0px;top:352px;letter-spacing:-0.109px;">21,000</span>
<span class="t b" style="right:921.0px;top:352px;letter-spacing:-0.109px;">21,000</span>
<span class="t b" style="right:606.0px;top:352px;letter-spacing:-0.109px;">21,000</span>
<span class="t b" style="right:1341.0px;top:367px;letter-spacing:-0.106px;">122 716,44</span>
<span class="t b" style="right:1026.0px;top:367px;letter-spacing:-0.109px;">21,000</span>
<span class="t b" style="right:921.0px;top:367px;letter-spacing:-0.109px;">21,000</span>
<span class="t b" style="right:606.0px;top:367px;letter-spacing:-0.109px;">21,000</span>
<span class="t" style="left:112.1px;top:382px;letter-spacing:0.134px;">Товар №13198</span>
<span class="t" style="right:1026.0px;top:382px;letter-spacing:-0.109px;">21,000</span>
<span class="t" style="right:921.0px;top:382px;letter-spacing:-0.109px;">21,000</span>
<span class="t" style="right:606.0px;top:382px;letter-spacing:-0.109px;">21,000</span>
<span class="t b" style="left:91.7px;top:397px;letter-spacing:0.073px;">Контрагент №1302</span>
<span class="t b" style="right:1026.0px;top:397px;letter-spacing:-0.109px;">50,000</span>
<span class="t b" style="right:921.0px;top:397px;letter-spacing:-0.109px;">50,000</span>
<span class="t b" style="right:711.0px;top:397px;letter-spacing:-0.109px;">50,000</span>
<span class="t b" style="left:98.4px;top:412px;letter-spacing:-0.051px;">Заказ покупателя АГ-00001029 от 21.12.2022 17:03:38</span>
<span class="t b" style="right:1341.0px;top:412px;letter-spacing:-0.106px;">362 406,00</span>
<span class="t b" style="right:1026.0px;top:412px;letter-spacing:-0.109px;">50,000</span>
<span class="t b" style="right:921.0px;top:412px;letter-spacing:-0.109px;">50,000</span>
<span class="t b" style="right:711.0px;top:412px;letter-spacing:-0.109px;">50,000</span>
<span class="t b" style="left:105.3px;top:427px;letter-spacing:-0.059px;">Заказ поставщику АГ-00000717 от 21.12.2022 18:18:46</span>
<span class="t b" style="right:1341.0px;top:427px;letter-spacing:-0.106px;">362 406,00</span>
<span class="t b" style="right:1026.0px;top:427px;letter-spacing:-0.109px;">50,000</span>
<span class="t b" style="right:921.0px;top:427px;letter-spacing:-0.109px;">50,000</span>
<span class="t b" style="right:711.0px;top:427px;letter-spacing:-0.109px;">50,000</span>
<span class="t" style="left:112.1px;top:442px;letter-spacing:0.134px;">Товар №13198</span>
<span class="t" style="right:1026.0px;top:442px;letter-spacing:-0.109px;">50,000</span>
<span class="t" style="right:921.0px;top:442px;letter-spacing:-0.109px;">50,000</span>
<span class="t" style="right:711.0px;top:442px;letter-spacing:-0.109px;">50,000</span>
<span class="t b" style="left:91.7px;top:457px;letter-spacing:0.073px;">Контрагент №1331</span>
<span class="t b" style="right:1026.0px;top:457px;letter-spacing:-0.109px;">21,000</span>
<span class="t b" style="right:921.0px;top:457px;letter-spacing:-0.109px;">21,000</span>
<span class="t b" style="right:711.0px;top:457px;letter-spacing:-0.106px;">9,000</span>
<span class="t b" style="right:606.0px;top:457px;letter-spacing:-0.109px;">12,000</span>
<span class="t b" style="left:98.4px;top:472px;letter-spacing:-0.051px;">Заказ покупателя АГ-00000014 от 17.01.2023 13:48:16</span>
<span class="t b" style="right:1341.0px;top:472px;letter-spacing:-0.106px;">128 410,74</span>
<span class="t b" style="right:1026.0px;top:472px;letter-spacing:-0.109px;">21,000</span>
<span class="t b" style="right:921.0px;top:472px;letter-spacing:-0.109px;">21,000</span>
<span class="t b" style="right:711.0px;top:472px;letter-spacing:-0.106px;">9,000</span>
<span class="t b" style="right:606.0px;top:472px;letter-spacing:-0.109px;">12,000</span>
<span class="t b" style="right:1341.0px;top:487px;letter-spacing:-0.106px;">128 410,74</span>
<span class="t b" style="right:1026.0px;top:487px;letter-spacing:-0.109px;">12,000</span>
<span class="t b" style="right:921.0px;top:487px;letter-spacing:-0.109px;">12,000</span>
<span class="t b" style="right:606.0px;top:487px;letter-spacing:-0.109px;">12,000</span>
<span class="t" style="left:112.1px;top:502px;letter-spacing:0.134px;">Товар №13198</span>
<span class="t" style="right:1026.0px;top:502px;letter-spacing:-0.109px;">12,000</span>
<span class="t" style="right:921.0px;top:502px;letter-spacing:-0.109px;">12,000</span>
<span class="t" style="right:606.0px;top:502px;letter-spacing:-0.109px;">12,000</span>
<span class="t b" style="left:105.3px;top:517px;letter-spacing:-0.059px;">Заказ поставщику АГ-00000017 от 20.01.2023 13:24:09</span>
<span class="t b" style="right:1341.0px;top:517px;letter-spacing:-0.106px;">128 410,74</span>
<span class="t b" style="right:1026.0px;top:517px;letter-spacing:-0.106px;">9,000</span>
<span class="t b" style="right:921.0px;top:517px;letter-spacing:-0.106px;">9,000</span>
<span class="t b" style="right:711.0px;top:517px;letter-spacing:-0.106px;">9,000</span>
<span class="t" style="left:112.1px;top:532px;letter-spacing:0.134px;">Товар №12495</span>
<span class="t" style="right:1026.0px;top:532px;letter-spacing:-0.106px;">9,000</span>
<span class="t" style="right:921.0px;top:532px;letter-spacing:-0.106px;">9,000</span>
<span class="t" style="right:711.0px;top:532px;letter-spacing:-0.106px;">9,000</span>
<span class="t b" style="left:91.7px;top:547px;letter-spacing:0.073px;">Контрагент №1375</span>
<span class="t b" style="right:1026.0px;top:547px;letter-spacing:-0.106px;">3,000</span>
<span class="t b" style="right:921.0px;top:547px;letter-spacing:-0.106px;">3,000</span>
<span class="t b" style="right:606.0px;top:547px;letter-spacing:-0.106px;">3,000</span>
<span class="t b" style="left:98.4px;top:562px;letter-spacing:-0.051px;">Заказ покупателя АГ-00000029 от 23.01.2023 17:17:00</span>
<span class="t b" style="right:1341.0px;top:562px;letter-spacing:-0.104px;">17 807,10</span>
<span class="t b" style="right:1026.0px;top:562px;letter-spacing:-0.106px;">3,000</span>
<span class="t b" style="right:921.0px;top:562px;letter-spacing:-0.106px;">3,000</span>
<span class="t b" style="right:606.0px;top:562px;letter-spacing:-0.106px;">3,000</span>
<span class="t b" style="right:1341.0px;top:577px;letter-spacing:-0.104px;">17 807,10</span>
<span class="t b" style="right:1026.0px;top:577px;letter-spacing:-0.106px;">3,000</span>
<span class="t b" style="right:921.0px;top:577px;letter-spacing:-0.106px;">3,000</span>
<span class="t b" style="right:606.0px;top:577px;letter-spacing:-0.106px;">3,000</span>
<span class="t" style="left:112.1px;top:592px;letter-spacing:0.134px;">Товар №13198</span>
<span class="t" style="right:1026.0px;top:592px;letter-spacing:-0.106px;">3,000</span>
<span class="t" style="right:921.0px;top:592px;letter-spacing:-0.106px;">3,000</span>
<span class="t" style="right:606.0px;top:592px;letter-spacing:-0.106px;">3,000</span>
<span class="t b" style="left:91.7px;top:607px;letter-spacing:0.073px;">Контрагент №1383</span>
<span class="t b" style="right:1026.0px;top:607px;letter-spacing:-0.109px;">82,000</span>
<span class="t b" style="right:921.0px;top:607px;letter-spacing:-0.109px;">82,000</span>
<span class="t b" style="right:711.0px;top:607px;letter-spacing:-0.109px;">80,000</span>
<span class="t b" style="right:606.0px;top:607px;letter-spacing:-0.106px;">2,000</span>
<span class="t b" style="left:98.4px;top:622px;letter-spacing:-0.051px;">Заказ покупателя АГ-00000018 от 19.01.2023 10:40:29</span>
<span class="t b" style="right:1341.0px;top:622px;letter-spacing:-0.103px;">1 625 239,70</span>
<span class="t b" style="right:1026.0px;top:622px;letter-spacing:-0.109px;">82,000</span>
<span class="t b" style="right:921.0px;top:622px;letter-spacing:-0.109px;">82,000</span>
<span class="t b" style="right:711.0px;top:622px;letter-spacing:-0.109px;">80,000</span>
<span class="t b" style="right:606.0px;top:622px;letter-spacing:-0.106px;">2,000</span>
<span class="t b" style="left:105.3px;top:637px;letter-spacing:-0.059px;">Заказ поставщику АГ-00000017 от 20.01.2023 13:24:09</span>
<span class="t b" style="right:1341.0px;top:637px;letter-spacing:-0.103px;">1 625 239,70</span>
<span class="t b" style="right:1026.0px;top:637px;letter-spacing:-0.109px;">82,000</span>
<span class="t b" style="right:921.0px;top:637px;letter-spacing:-0.109px;">82,000</span>
<span class="t b" style="right:711.0px;top:637px;letter-spacing:-0.109px;">80,000</span>
<span class="t b" style="right:606.0px;top:637px;letter-spacing:-0.106px;">2,000</span>
<span class="t" style="left:112.1px;top:652px;letter-spacing:0.134px;">Товар №13198</span>
<span class="t" style="right:1026.0px;top:652px;letter-spacing:-0.109px;">52,000</span>
<span class="t" style="right:921.0px;top:652px;letter-spacing:-0.109px;">52,000</span>
<span class="t" style="right:711.0px;top:652px;letter-spacing:-0.109px;">50,000</span>
<span class="t" style="right:606.0px;top:652px;letter-spacing:-0.106px;">2,000</span>
<span class="t" style="left:112.1px;top:667px;letter-spacing:0.134px;">Товар №12495</span>
<span class="t" style="right:1026.0px;top:667px;letter-spacing:-0.109px;">30,000</span>
<span class="t" style="right:921.0px;top:667px;letter-spacing:-0.109px;">30,000</span>
<span class="t" style="right:711.0px;top:667px;letter-spacing:-0.109px;">30,000</span>
<span class="t b" style="left:91.7px;top:682px;letter-spacing:0.086px;">Контрагент №201</span>
<span class="t b" style="right:1026.0px;top:682px;letter-spacing:-0.109px;">162,000</span>
<span class="t b" style="right:921.0px;top:682px;letter-spacing:-0.022px;">112,000</span>
<span class="t b" style="right:711.0px;top:682px;letter-spacing:-0.022px;">112,000</span>
<div style="left:8px;top:20px;width:1px;height:699px;background:#b3ab84;"></div>
<div style="left:21px;top:35px;width:1px;height:77px;background:#b3ab84;"></div>
<div style="left:21px;top:111px;width:5px;height:1px;background:#b3ab84;"></div>
<div style="left:34px;top:50px;width:1px;height:62px;background:#b3ab84;"></div>
<div style="left:34px;top:111px;width:5px;height:1px;background:#b3ab84;"></div>
<div style="left:47px;top:65px;width:1px;height:17px;background:#b3ab84;"></div>
<div style="left:47px;top:81px;width:5px;height:1px;background:#b3ab84;"></div>
<div style="left:47px;top:95px;width:1px;height:17px;background:#b3ab84;"></div>
<div style="left:47px;top:111px;width:5px;height:1px;background:#b3ab84;"></div>
<div style="left:21px;top:125px;width:1px;height:47px;background:#b3ab84;"></div>
<div style="left:21px;top:171px;width:5px;height:1px;background:#b3ab84;"></div>
<div style="left:34px;top:140px;width:1px;height:32px;background:#b3ab84;"></div>
<div style="left:34px;top:171px;width:5px;height:1px;background:#b3ab84;"></div>
<div style="left:47px;top:155px;width:1px;height:17px;background:#b3ab84;"></div>
<div style="left:47px;top:171px;width:5px;height:1px;background:#b3ab84;"></div>
<div style="left:21px;top:185px;width:1px;height:92px;background:#b3ab84;"></div>
<div style="left:21px;top:276px;width:5px;height:1px;background:#b3ab84;"></div>
<div style="left:34px;top:200px;width:1px;height:32px;background:#b3ab84;"></div>
<div style="left:34px;top:231px;width:5px;height:1px;background:#b3ab84;"></div>
<div style="left:47px;top:215px;width:1px;height:17px;background:#b3ab84;"></div>
<div style="left:47px;top:231px;width:5px;height:1px;background:#b3ab84;"></div>
<div style="left:34px;top:245px;width:1px;height:32px;background:#b3ab84;"></div>
<div style="left:34px;top:276px;width:5px;height:1px;background:#b3ab84;"></div>
<div style="left:47px;top:260px;width:1px;height:17px;background:#b3ab84;"></div>
<div style="left:47px;top:276px;width:5px;height:1px;background:#b3ab84;"></div>
<div style="left:21px;top:290px;width:1px;height:47px;background:#b3ab84;"></div>
<div style="left:21px;top:336px;width:5px;height:1px;background:#b3ab84;"></div>
<div style="left:34px;top:305px;width:1px;height:32px;background:#b3ab84;"></div>
<div style="left:34px;top:336px;width:5px;height:1px;background:#b3ab84;"></div>
<div style="left:47px;top:320px;width:1px;height:17px;background:#b3ab84;"></div>
<div style="left:47px;top:336px;width:5px;height:1px;background:#b3ab84;"></div>
<div style="left:21px;top:350px;width:1px;height:47px;background:#b3ab84;"></div>
<div style="left:21px;top:396px;width:5px;height:1px;background:#b3ab84;"></div>
<div style="left:34px;top:365px;width:1px;height:32px;background:#b3ab84;"></div>
<div style="left:34px;top:396px;width:5px;height:1px;background:#b3ab84;"></div>
<div style="left:47px;top:380px;width:1px;height:17px;background:#b3ab84;"></div>
<div style="left:47px;top:396px;width:5px;height:1px;background:#b3ab84;"></div>
<div style="left:21px;top:410px;width:1px;height:47px;background:#b3ab84;"></div>
<div style="left:21px;top:456px;width:5px;height:1px;background:#b3ab84;"></div>
<div style="left:34px;top:425px;width:1px;height:32px;background:#b3ab84;"></div>
<div style="left:34px;top:456px;width:5px;height:1px;background:#b3ab84;"></div>
<div style="left:47px;top:440px;width:1px;height:17px;background:#b3ab84;"></div>
<div style="left:47px;top:456px;width:5px;height:1px;background:#b3ab84;"></div>
<div style="left:21px;top:470px;width:1px;height:77px;background:#b3ab84;"></div>
<div style="left:21px;top:546px;width:5px;height:1px;background:#b3ab84;"></div>
<div style="left:34px;top:485px;width:1px;height:62px;background:#b3ab84;"></div>
<div style="left:34px;top:546px;width:5px;height:1px;background:#b3ab84;"></div>
<div style="left:47px;top:500px;width:1px;height:17px;background:#b3ab84;"></div>
<div style="left:47px;top:516px;width:5px;height:1px;background:#b3ab84;"></div>
<div style="left:47px;top:530px;width:1px;height:17px;background:#b3ab84;"></div>
<div style="left:47px;top:546px;width:5px;height:1px;background:#b3ab84;"></div>
<div style="left:21px;top:560px;width:1px;height:47px;background:#b3ab84;"></div>
<div style="left:21px;top:606px;width:5px;height:1px;background:#b3ab84;"></div>
<div style="left:34px;top:575px;width:1px;height:32px;background:#b3ab84;"></div>
<div style="left:34px;top:606px;width:5px;height:1px;background:#b3ab84;"></div>
<div style="left:47px;top:590px;width:1px;height:17px;background:#b3ab84;"></div>
<div style="left:47px;top:606px;width:5px;height:1px;background:#b3ab84;"></div>
<div style="left:21px;top:620px;width:1px;height:62px;background:#b3ab84;"></div>
<div style="left:21px;top:681px;width:5px;height:1px;background:#b3ab84;"></div>
<div style="left:34px;top:635px;width:1px;height:47px;background:#b3ab84;"></div>
<div style="left:34px;top:681px;width:5px;height:1px;background:#b3ab84;"></div>
<div style="left:47px;top:650px;width:1px;height:32px;background:#b3ab84;"></div>
<div style="left:47px;top:681px;width:5px;height:1px;background:#b3ab84;"></div>
<div style="left:21px;top:695px;width:1px;height:24px;background:#b3ab84;"></div>
<div style="left:3px;top:9px;width:11px;height:11px;border:1px solid #c3bb97;border-radius:2px;box-sizing:border-box;background:linear-gradient(#ffffff,#f3efdc)"></div>
<div style="left:5px;top:14px;width:7px;height:1px;background:#3a2f0c;"></div>
<div style="left:16px;top:24px;width:11px;height:11px;border:1px solid #c3bb97;border-radius:2px;box-sizing:border-box;background:linear-gradient(#ffffff,#f3efdc)"></div>
<div style="left:18px;top:29px;width:7px;height:1px;background:#3a2f0c;"></div>
<div style="left:29px;top:39px;width:11px;height:11px;border:1px solid #c3bb97;border-radius:2px;box-sizing:border-box;background:linear-gradient(#ffffff,#f3efdc)"></div>
<div style="left:31px;top:44px;width:7px;height:1px;background:#3a2f0c;"></div>
<div style="left:42px;top:54px;width:11px;height:11px;border:1px solid #c3bb97;border-radius:2px;box-sizing:border-box;background:linear-gradient(#ffffff,#f3efdc)"></div>
<div style="left:44px;top:59px;width:7px;height:1px;background:#3a2f0c;"></div>
<div style="left:42px;top:84px;width:11px;height:11px;border:1px solid #c3bb97;border-radius:2px;box-sizing:border-box;background:linear-gradient(#ffffff,#f3efdc)"></div>
<div style="left:44px;top:89px;width:7px;height:1px;background:#3a2f0c;"></div>
<div style="left:16px;top:114px;width:11px;height:11px;border:1px solid #c3bb97;border-radius:2px;box-sizing:border-box;background:linear-gradient(#ffffff,#f3efdc)"></div>
<div style="left:18px;top:119px;width:7px;height:1px;background:#3a2f0c;"></div>
<div style="left:29px;top:129px;width:11px;height:11px;border:1px solid #c3bb97;border-radius:2px;box-sizing:border-box;background:linear-gradient(#ffffff,#f3efdc)"></div>
<div style="left:31px;top:134px;width:7px;height:1px;background:#3a2f0c;"></div>
<div style="left:42px;top:144px;width:11px;height:11px;border:1px solid #c3bb97;border-radius:2px;box-sizing:border-box;background:linear-gradient(#ffffff,#f3efdc)"></div>
<div style="left:44px;top:149px;width:7px;height:1px;background:#3a2f0c;"></div>
<div style="left:16px;top:174px;width:11px;height:11px;border:1px solid #c3bb97;border-radius:2px;box-sizing:border-box;background:linear-gradient(#ffffff,#f3efdc)"></div>
<div style="left:18px;top:179px;width:7px;height:1px;background:#3a2f0c;"></div>
<div style="left:29px;top:189px;width:11px;height:11px;border:1px solid #c3bb97;border-radius:2px;box-sizing:border-box;background:linear-gradient(#ffffff,#f3efdc)"></div>
<div style="left:31px;top:194px;width:7px;height:1px;background:#3a2f0c;"></div>
<div style="left:42px;top:204px;width:11px;height:11px;border:1px solid #c3bb97;border-radius:2px;box-sizing:border-box;background:linear-gradient(#ffffff,#f3efdc)"></div>
<div style="left:44px;top:209px;width:7px;height:1px;background:#3a2f0c;"></div>
<div style="left:29px;top:234px;width:11px;height:11px;border:1px solid #c3bb97;border-radius:2px;box-sizing:border-box;background:linear-gradient(#ffffff,#f3efdc)"></div>
<div style="left:31px;top:239px;width:7px;height:1px;background:#3a2f0c;"></div>
<div style="left:42px;top:249px;width:11px;height:11px;border:1px solid #c3bb97;border-radius:2px;box-sizing:border-box;background:linear-gradient(#ffffff,#f3efdc)"></div>
<div style="left:44px;top:254px;width:7px;height:1px;background:#3a2f0c;"></div>
<div style="left:16px;top:279px;width:11px;height:11px;border:1px solid #c3bb97;border-radius:2px;box-sizing:border-box;background:linear-gradient(#ffffff,#f3efdc)"></div>
<div style="left:18px;top:284px;width:7px;height:1px;background:#3a2f0c;"></div>
<div style="left:29px;top:294px;width:11px;height:11px;border:1px solid #c3bb97;border-radius:2px;box-sizing:border-box;background:linear-gradient(#ffffff,#f3efdc)"></div>
<div style="left:31px;top:299px;width:7px;height:1px;background:#3a2f0c;"></div>
<div style="left:42px;top:309px;width:11px;height:11px;border:1px solid #c3bb97;border-radius:2px;box-sizing:border-box;background:linear-gradient(#ffffff,#f3efdc)"></div>
<div style="left:44px;top:314px;width:7px;height:1px;background:#3a2f0c;"></div>
<div style="left:16px;top:339px;width:11px;height:11px;border:1px solid #c3bb97;border-radius:2px;box-sizing:border-box;background:linear-gradient(#ffffff,#f3efdc)"></div>
<div style="left:18px;top:344px;width:7px;height:1px;background:#3a2f0c;"></div>
<div style="left:29px;top:354px;width:11px;height:11px;border:1px solid #c3bb97;border-radius:2px;box-sizing:border-box;background:linear-gradient(#ffffff,#f3efdc)"></div>
<div style="left:31px;top:359px;width:7px;height:1px;background:#3a2f0c;"></div>
<div style="left:42px;top:369px;width:11px;height:11px;border:1px solid #c3bb97;border-radius:2px;box-sizing:border-box;background:linear-gradient(#ffffff,#f3efdc)"></div>
<div style="left:44px;top:374px;width:7px;height:1px;background:#3a2f0c;"></div>
<div style="left:16px;top:399px;width:11px;height:11px;border:1px solid #c3bb97;border-radius:2px;box-sizing:border-box;background:linear-gradient(#ffffff,#f3efdc)"></div>
<div style="left:18px;top:404px;width:7px;height:1px;background:#3a2f0c;"></div>
<div style="left:29px;top:414px;width:11px;height:11px;border:1px solid #c3bb97;border-radius:2px;box-sizing:border-box;background:linear-gradient(#ffffff,#f3efdc)"></div>
<div style="left:31px;top:419px;width:7px;height:1px;background:#3a2f0c;"></div>
<div style="left:42px;top:429px;width:11px;height:11px;border:1px solid #c3bb97;border-radius:2px;box-sizing:border-box;background:linear-gradient(#ffffff,#f3efdc)"></div>
<div style="left:44px;top:434px;width:7px;height:1px;background:#3a2f0c;"></div>
<div style="left:16px;top:459px;width:11px;height:11px;border:1px solid #c3bb97;border-radius:2px;box-sizing:border-box;background:linear-gradient(#ffffff,#f3efdc)"></div>
<div style="left:18px;top:464px;width:7px;height:1px;background:#3a2f0c;"></div>
<div style="left:29px;top:474px;width:11px;height:11px;border:1px solid #c3bb97;border-radius:2px;box-sizing:border-box;background:linear-gradient(#ffffff,#f3efdc)"></div>
<div style="left:31px;top:479px;width:7px;height:1px;background:#3a2f0c;"></div>
<div style="left:42px;top:489px;width:11px;height:11px;border:1px solid #c3bb97;border-radius:2px;box-sizing:border-box;background:linear-gradient(#ffffff,#f3efdc)"></div>
<div style="left:44px;top:494px;width:7px;height:1px;background:#3a2f0c;"></div>
<div style="left:42px;top:519px;width:11px;height:11px;border:1px solid #c3bb97;border-radius:2px;box-sizing:border-box;background:linear-gradient(#ffffff,#f3efdc)"></div>
<div style="left:44px;top:524px;width:7px;height:1px;background:#3a2f0c;"></div>
<div style="left:16px;top:549px;width:11px;height:11px;border:1px solid #c3bb97;border-radius:2px;box-sizing:border-box;background:linear-gradient(#ffffff,#f3efdc)"></div>
<div style="left:18px;top:554px;width:7px;height:1px;background:#3a2f0c;"></div>
<div style="left:29px;top:564px;width:11px;height:11px;border:1px solid #c3bb97;border-radius:2px;box-sizing:border-box;background:linear-gradient(#ffffff,#f3efdc)"></div>
<div style="left:31px;top:569px;width:7px;height:1px;background:#3a2f0c;"></div>
<div style="left:42px;top:579px;width:11px;height:11px;border:1px solid #c3bb97;border-radius:2px;box-sizing:border-box;background:linear-gradient(#ffffff,#f3efdc)"></div>
<div style="left:44px;top:584px;width:7px;height:1px;background:#3a2f0c;"></div>
<div style="left:16px;top:609px;width:11px;height:11px;border:1px solid #c3bb97;border-radius:2px;box-sizing:border-box;background:linear-gradient(#ffffff,#f3efdc)"></div>
<div style="left:18px;top:614px;width:7px;height:1px;background:#3a2f0c;"></div>
<div style="left:29px;top:624px;width:11px;height:11px;border:1px solid #c3bb97;border-radius:2px;box-sizing:border-box;background:linear-gradient(#ffffff,#f3efdc)"></div>
<div style="left:31px;top:629px;width:7px;height:1px;background:#3a2f0c;"></div>
<div style="left:42px;top:639px;width:11px;height:11px;border:1px solid #c3bb97;border-radius:2px;box-sizing:border-box;background:linear-gradient(#ffffff,#f3efdc)"></div>
<div style="left:44px;top:644px;width:7px;height:1px;background:#3a2f0c;"></div>
<div style="left:16px;top:684px;width:11px;height:11px;border:1px solid #c3bb97;border-radius:2px;box-sizing:border-box;background:linear-gradient(#ffffff,#f3efdc)"></div>
<div style="left:18px;top:689px;width:7px;height:1px;background:#3a2f0c;"></div>
</div>
<svg style="width:0;height:0"><defs><linearGradient id="gar" x1="0" y1="0" x2="1" y2="0"><stop offset="0" stop-color="#58585c"/><stop offset="1" stop-color="#c4c4c4"/></linearGradient><linearGradient id="gad" x1="0" y1="0" x2="0" y2="1"><stop offset="0" stop-color="#58585c"/><stop offset="1" stop-color="#c4c4c4"/></linearGradient></defs></svg>
<div style="left:1893px;top:206px;width:1px;height:764px;background:#b3ab84;"></div>
<div style="left:1894px;top:206px;width:15px;height:764px;background:#f9f8f1;"></div>
<div style="left:1894px;top:206px;width:15px;height:20px;background:linear-gradient(135deg,#fdfcf3,#efebd3)"></div>
<div style="left:1894px;top:226px;width:15px;height:1px;background:#b9b18c;"></div>
<svg style="left:1898px;top:212px;width:7px;height:7px" viewBox="0 0 7 7"><path d="M3.5 0L7 7H0z" fill="#c6c6c6"/></svg>
<div style="left:1894px;top:227px;width:15px;height:510px;background:linear-gradient(to right,#fcfbf1,#efebd0 55%,#e3deba)"></div>
<svg style="left:1899px;top:480px;width:5px;height:5px" viewBox="0 0 5 5"><circle cx="2.5" cy="2.5" r="2" fill="#d6d2bc"/><circle cx="3.2" cy="3.2" r="1.2" fill="#f0ecd4"/></svg>
<div style="left:1894px;top:737px;width:15px;height:1px;background:#b9b18c;"></div>
<div style="left:1894px;top:949px;width:15px;height:1px;background:#b9b18c;"></div>
<div style="left:1894px;top:950px;width:15px;height:20px;background:linear-gradient(135deg,#fdfcf3,#efebd3)"></div>
<svg style="left:1898px;top:957px;width:7px;height:7px" viewBox="0 0 7 7"><path d="M0 0h7L3.5 7z" fill="url(#gad)"/></svg>
<div style="left:11px;top:970px;width:1898px;height:1px;background:#b3ab84;"></div>
<div style="left:11px;top:971px;width:1898px;height:15px;background:#f9f8f1;"></div>
<div style="left:11px;top:971px;width:20px;height:15px;background:linear-gradient(135deg,#fdfcf3,#efebd3)"></div>
<div style="left:31px;top:971px;width:1px;height:15px;background:#b9b18c;"></div>
<svg style="left:17px;top:975px;width:7px;height:7px" viewBox="0 0 7 7"><path d="M7 0v7L0 3.5z" fill="#c6c6c6"/></svg>
<div style="left:32px;top:971px;width:1683px;height:15px;background:linear-gradient(#fcfbf1,#efebd0 55%,#e3deba)"></div>
<svg style="left:870px;top:975px;width:5px;height:5px" viewBox="0 0 5 5"><circle cx="2.5" cy="2.5" r="2" fill="#d6d2bc"/><circle cx="3.2" cy="3.2" r="1.2" fill="#f0ecd4"/></svg>
<div style="left:1715px;top:971px;width:1px;height:15px;background:#b9b18c;"></div>
<div style="left:1872px;top:971px;width:1px;height:15px;background:#b9b18c;"></div>
<div style="left:1873px;top:971px;width:20px;height:15px;background:linear-gradient(135deg,#fdfcf3,#efebd3)"></div>
<svg style="left:1880px;top:975px;width:7px;height:7px" viewBox="0 0 7 7"><path d="M0 0v7L7 3.5z" fill="url(#gar)"/></svg>
<div style="left:1893px;top:971px;width:1px;height:15px;background:#b9b18c;"></div>
<div style="left:1894px;top:971px;width:15px;height:15px;background:#f9f8f2;"></div>
<div style="left:401px;top:141px;width:328px;height:49px;border:1px solid #8c8c8c;box-sizing:border-box;background:#fdfbf0"></div>
<div style="left:403px;top:143px;width:24px;height:45px;background:#ece8d2;"></div>
<span class="t" style="top:146px;left:434.7px;font-size:12px;line-height:16px;color:#2a2208;transform:scaleX(0.9261);transform-origin:0 0;">Сформировать один заказ поставщику</span>
<span class="t" style="top:169px;left:434.7px;font-size:12px;line-height:16px;color:#2a2208;transform:scaleX(0.9250);transform-origin:0 0;">Сформировать заказы по основному поставщику</span>
<svg style="width:0;height:0"><defs><radialGradient id="g1c" cx="0.45" cy="0.3" r="0.75"><stop offset="0" stop-color="#fff27a"/><stop offset="0.55" stop-color="#fbdc3c"/><stop offset="1" stop-color="#efd3a2"/></radialGradient><linearGradient id="gpg" x1="0" y1="0" x2="0.6" y2="1"><stop offset="0" stop-color="#ffffff"/><stop offset="1" stop-color="#d4def0"/></linearGradient><linearGradient id="gfo" x1="0" y1="0" x2="0" y2="1"><stop offset="0" stop-color="#f9e27a"/><stop offset="1" stop-color="#ecc44e"/></linearGradient><radialGradient id="gin" cx="0.5" cy="0.45" r="0.6"><stop offset="0" stop-color="#fff3dc"/><stop offset="0.6" stop-color="#f9c878"/><stop offset="1" stop-color="#ef9f3a"/></radialGradient><linearGradient id="gwr" x1="0" y1="0" x2="1" y2="0"><stop offset="0" stop-color="#8c8c8c"/><stop offset="0.5" stop-color="#f0f0f0"/><stop offset="1" stop-color="#8c8c8c"/></linearGradient><linearGradient id="gwn" x1="0" y1="0" x2="0" y2="1"><stop offset="0" stop-color="#ffffff"/><stop offset="1" stop-color="#c4d8ec"/></linearGradient></defs></svg>
<svg style="left:2px;top:3px;width:16px;height:16px" viewBox="0 0 16 16" ><circle cx="8" cy="7.9" r="7.3" fill="url(#g1c)" stroke="#d8cfa8" stroke-width="0.6"/><path d="M2.2 6.6l1.6-1.4h1v5.9h-1.4v-4.3l-1.2 0.6z" fill="#e8140c"/><path d="M11.6 6.3a2.6 2.6 0 1 0 -1.8 4.4h5.2v-1.6h-5.2a1.1 1.1 0 1 1 0.8-1.9z" fill="#e8140c"/></svg>
<div style="left:3px;top:52px;width:3px;height:13px;background:repeating-linear-gradient(to bottom,#bdb58e 0,#bdb58e 1px,transparent 1px,transparent 2px)"></div>
<div style="left:79px;top:50px;width:1px;height:19px;background:linear-gradient(to bottom,rgba(196,188,150,0),#c4bc96 25%,#c4bc96 75%,rgba(196,188,150,0))"></div>
<div style="left:80px;top:50px;width:1px;height:19px;background:linear-gradient(to bottom,rgba(255,255,255,0),#fdfcf6 25%,#fdfcf6 75%,rgba(255,255,255,0))"></div>
<div style="left:153px;top:50px;width:1px;height:19px;background:linear-gradient(to bottom,rgba(196,188,150,0),#c4bc96 25%,#c4bc96 75%,rgba(196,188,150,0))"></div>
<div style="left:154px;top:50px;width:1px;height:19px;background:linear-gradient(to bottom,rgba(255,255,255,0),#fdfcf6 25%,#fdfcf6 75%,rgba(255,255,255,0))"></div>
<div style="left:204px;top:50px;width:1px;height:19px;background:linear-gradient(to bottom,rgba(196,188,150,0),#c4bc96 25%,#c4bc96 75%,rgba(196,188,150,0))"></div>
<div style="left:205px;top:50px;width:1px;height:19px;background:linear-gradient(to bottom,rgba(255,255,255,0),#fdfcf6 25%,#fdfcf6 75%,rgba(255,255,255,0))"></div>
<div style="left:255px;top:50px;width:1px;height:19px;background:linear-gradient(to bottom,rgba(196,188,150,0),#c4bc96 25%,#c4bc96 75%,rgba(196,188,150,0))"></div>
<div style="left:256px;top:50px;width:1px;height:19px;background:linear-gradient(to bottom,rgba(255,255,255,0),#fdfcf6 25%,#fdfcf6 75%,rgba(255,255,255,0))"></div>
<div style="left:480px;top:50px;width:1px;height:19px;background:linear-gradient(to bottom,rgba(196,188,150,0),#c4bc96 25%,#c4bc96 75%,rgba(196,188,150,0))"></div>
<div style="left:481px;top:50px;width:1px;height:19px;background:linear-gradient(to bottom,rgba(255,255,255,0),#fdfcf6 25%,#fdfcf6 75%,rgba(255,255,255,0))"></div>
<div style="left:508px;top:50px;width:1px;height:19px;background:linear-gradient(to bottom,rgba(196,188,150,0),#c4bc96 25%,#c4bc96 75%,rgba(196,188,150,0))"></div>
<div style="left:509px;top:50px;width:1px;height:19px;background:linear-gradient(to bottom,rgba(255,255,255,0),#fdfcf6 25%,#fdfcf6 75%,rgba(255,255,255,0))"></div>
<div style="left:629px;top:50px;width:1px;height:19px;background:linear-gradient(to bottom,rgba(196,188,150,0),#c4bc96 25%,#c4bc96 75%,rgba(196,188,150,0))"></div>
<div style="left:630px;top:50px;width:1px;height:19px;background:linear-gradient(to bottom,rgba(255,255,255,0),#fdfcf6 25%,#fdfcf6 75%,rgba(255,255,255,0))"></div>
<div style="left:703px;top:50px;width:1px;height:19px;background:linear-gradient(to bottom,rgba(196,188,150,0),#c4bc96 25%,#c4bc96 75%,rgba(196,188,150,0))"></div>
<div style="left:704px;top:50px;width:1px;height:19px;background:linear-gradient(to bottom,rgba(255,255,255,0),#fdfcf6 25%,#fdfcf6 75%,rgba(255,255,255,0))"></div>
<svg style="left:14px;top:52px;width:12px;height:14px" viewBox="0 0 12 14" ><path d="M0.5 0.5h7.5l3.5 3.5v9.5h-11z" fill="url(#gpg)" stroke="#8ea8c4"/><path d="M8 0.5v3.5h3.5" fill="#dfe8f4" stroke="#8ea8c4"/></svg>
<svg style="left:36px;top:51px;width:14px;height:15px" viewBox="0 0 14 15" ><path d="M0.5 14.3v-9.8q0-1 1-1h3.6l1.6 1.8h5.8q1 0 1 1v8q0 0.7-1 0.7h-11z" fill="url(#gfo)" stroke="#c9a040" stroke-width="0.9"/><path d="M10.4 9.5v-8" stroke="#2b5b80" stroke-width="1.2"/><path d="M8 3.2l2.4-2.7 2.4 2.7" fill="none" stroke="#2b5b80" stroke-width="1.2"/></svg>
<svg style="left:58px;top:51px;width:15px;height:15px" viewBox="0 0 15 15" ><rect x="0.5" y="0.5" width="14" height="14" rx="1" fill="#9cc0de" stroke="#4f7595"/><rect x="3" y="1" width="9" height="5.2" fill="#f4fafe" stroke="#7fa4c4" stroke-width="0.6"/><path d="M4 2.8h7M4 4.4h7" stroke="#b8d4e8" stroke-width="0.8"/><rect x="3.8" y="8.8" width="8" height="5.2" fill="#f2f2f2" stroke="#4f6f8c" stroke-width="0.6"/><rect x="5.4" y="10" width="1.6" height="3" fill="#3a4a5a"/></svg>
<svg style="left:87px;top:51px;width:13px;height:15px" viewBox="0 0 13 15" ><path d="M2.200 0.500l7.400 10.500M10.800 0.500l-7.400 10.500" stroke="#a9b9cd" stroke-width="2.200" fill="none"/><rect x="0.800" y="10.800" width="3.600" height="3.600" fill="none" stroke="#a9b9cd" stroke-width="1.200"/><rect x="8.600" y="10.800" width="3.600" height="3.600" fill="none" stroke="#a9b9cd" stroke-width="1.200"/></svg>
<svg style="left:109px;top:51px;width:15px;height:15px" viewBox="0 0 15 15" ><path d="M0.5 0.5h5.5l3 3v6h-8.500z" fill="#f2f5fb" stroke="#a9b6d6"/><path d="M2 3.5h3M2 5.5h5M2 7.5h5" stroke="#b0b8c8" stroke-width="0.9"/><path d="M6.5 5.500h5l3 3v6h-8z" fill="#fafbfe" stroke="#a9b6d6"/><path d="M8 8.500h3M8 10.5h5M8 12.500h5" stroke="#b0b8c8" stroke-width="0.9"/></svg>
<svg style="left:132px;top:51px;width:15px;height:15px" viewBox="0 0 15 15" ><rect x="0.5" y="1.500" width="13" height="12" rx="1" fill="#d6d6d6" stroke="#a9c2da"/><rect x="4.200" y="0.300" width="5.600" height="3" rx="1" fill="#d2d2ba" stroke="#b4b498" stroke-width="0.6"/><path d="M6.500 5.500h5l3 3v6h-8z" fill="#d8dde4" stroke="#a9c2da"/><path d="M8 10.500h5M8 12.500h5" stroke="#b4c4d6" stroke-width="0.9"/></svg>
<svg style="left:161px;top:52px;width:15px;height:14px" viewBox="0 0 15 14" ><rect x="4.400" y="0.500" width="6.600" height="5.500" fill="#f6fafe" stroke="#8fb0cc"/><rect x="0.600" y="3.800" width="14" height="8.400" rx="1.800" fill="#ece6e0" stroke="#8c8c8c"/><rect x="1.200" y="4.400" width="12.800" height="2.600" rx="1" fill="#fdfdfd"/><path d="M1.400 8.500h12.400" stroke="#a87858" stroke-width="1.200"/><circle cx="8.600" cy="8.500" r="0.800" fill="#e82018"/><circle cx="10.800" cy="8.500" r="0.800" fill="#28a018"/><rect x="4.600" y="10" width="6" height="2.200" fill="#141414"/><rect x="4" y="12.200" width="7.200" height="1.400" fill="#fff" stroke="#8c8c8c" stroke-width="0.500"/></svg>
<svg style="left:183px;top:51px;width:16px;height:16px" viewBox="0 0 16 16" ><path d="M0.500 0.500h8l3.500 3.500v10h-11.500z" fill="url(#gpg)" stroke="#6f95b8"/><path d="M8.500 0.500v3.500h3.500" fill="#e4ecf6" stroke="#6f95b8" stroke-width="0.800"/><circle cx="9.200" cy="9.400" r="3" fill="#cfe0f6" stroke="#a06a40" stroke-width="1.200"/><path d="M11.600 11.800l2.600 2.800" stroke="#8a4f1e" stroke-width="2.200" stroke-linecap="round"/></svg>
<svg style="left:214px;top:53px;width:12px;height:12px" viewBox="0 0 12 12" ><path d="M0.800 5.600l5-5v3q5.400 0 5.400 7.400q-1.600-3.400-5.400-3.400v3z" fill="#a9b9a3"/></svg>
<svg style="left:235px;top:53px;width:12px;height:12px" viewBox="0 0 12 12" ><path d="M11.200 5.600l-5-5v3q-5.400 0-5.400 7.400q1.600-3.400 5.400-3.400v3z" fill="#a9b9a3"/></svg>
<svg style="left:263px;top:52px;width:16px;height:16px" viewBox="0 0 16 16" ><circle cx="6.5" cy="6.5" r="5" fill="#cfe0f7" stroke="#aa6f50" stroke-width="1.2"/><path d="M10.2 10.2L13.4 13.6" stroke="#b87a52" stroke-width="2.400" stroke-linecap="round"/></svg>
<div style="left:282px;top:49px;width:150px;height:19px;border:1px solid #b7af8a;border-radius:4px;box-sizing:border-box;background:#fff"></div>
<div style="left:401px;top:49px;width:31px;height:19px;border:1px solid #c8c19e;border-left-color:#cbc4a2;border-radius:0 4px 4px 0;box-sizing:border-box;background:linear-gradient(#fbf9ef,#ede8cf)"></div>
<div style="left:416px;top:50px;width:1px;height:17px;background:#cbc4a2;"></div>
<svg style="left:405px;top:57px;width:8px;height:4px" viewBox="0 0 8 4" ><path d="M0 0h8l-4 4z" fill="#5a4508"/></svg>
<svg style="left:420px;top:55px;width:8px;height:7px" viewBox="0 0 8 7" ><path d="M0.600 0.400l6.800 6.200M7.400 0.400l-6.800 6.200" stroke="#5a4508" stroke-width="1.700" fill="none"/></svg>
<svg style="left:435px;top:52px;width:17px;height:15px" viewBox="0 0 17 15" ><path d="M1.200 4.800q6.500-6 13.600-1" fill="none" stroke="#1c5c9c" stroke-width="1.300"/><path d="M15.900 1.200v4.400h-4.400z" fill="#1c5c9c"/><circle cx="8.6" cy="7.2" r="2.8" fill="#cfe0f7" stroke="#aa6f50" stroke-width="1.1"/><path d="M10.7 9.3L13.2 12.4" stroke="#b87a52" stroke-width="2.400" stroke-linecap="round"/></svg>
<svg style="left:458px;top:52px;width:17px;height:15px" viewBox="0 0 17 15" ><path d="M15.800 4.800q-6.500-6-13.600-1" fill="none" stroke="#1c5c9c" stroke-width="1.300"/><path d="M1.100 1.200v4.400h4.400z" fill="#1c5c9c"/><circle cx="8.4" cy="7.2" r="2.8" fill="#cfe0f7" stroke="#aa6f50" stroke-width="1.1"/><path d="M10.5 9.3L13 12.4" stroke="#b87a52" stroke-width="2.400" stroke-linecap="round"/></svg>
<svg style="left:488px;top:52px;width:15px;height:14px" viewBox="0 0 15 14" ><rect x="0.5" y="0.5" width="8" height="9" fill="url(#gwn)" stroke="#5a82ac" stroke-width="0.900"/><rect x="0.5" y="0.5" width="8" height="1.800" fill="#4a7aaa"/><rect x="3.4" y="2.4" width="8.4" height="9.2" fill="url(#gwn)" stroke="#5a82ac" stroke-width="0.900"/><rect x="3.4" y="2.4" width="8.4" height="1.800" fill="#4a7aaa"/><rect x="5.8" y="4.6" width="8.4" height="9" fill="url(#gwn)" stroke="#5a82ac" stroke-width="0.900"/><rect x="5.8" y="4.6" width="8.4" height="1.800" fill="#4a7aaa"/></svg>
<svg style="left:515px;top:51px;width:16px;height:16px" viewBox="0 0 16 16" ><circle cx="8" cy="8" r="7.400" fill="url(#gin)" stroke="#9090a0" stroke-width="0.900"/><circle cx="8.300" cy="3.900" r="1.150" fill="#2f7d12"/><rect x="7" y="6" width="2.300" height="7" fill="#2f7d12"/></svg>
<svg style="left:537px;top:64px;width:7px;height:4px" viewBox="0 0 7 4"><path d="M0 0h7l-3.5 4z" fill="#3a2a00"/></svg>
<div style="left:553px;top:52px;width:3px;height:13px;background:repeating-linear-gradient(to bottom,#bdb58e 0,#bdb58e 1px,transparent 1px,transparent 2px)"></div>
<svg style="left:563px;top:51px;width:13px;height:15px" viewBox="0 0 13 15" ><rect x="0.500" y="0.500" width="12" height="14" rx="0.800" fill="#fcdcb0" stroke="#a4b4c4"/><rect x="2.200" y="2" width="8.600" height="2.200" fill="#3c9c22"/><rect x="2.6" y="5.6" width="1.800" height="1.100" fill="#4a4238"/><rect x="5.7" y="5.6" width="1.800" height="1.100" fill="#4a4238"/><rect x="8.8" y="5.6" width="1.800" height="1.100" fill="#d83020"/><rect x="2.6" y="7.7" width="1.800" height="1.100" fill="#4a4238"/><rect x="5.7" y="7.7" width="1.800" height="1.100" fill="#4a4238"/><rect x="8.8" y="7.7" width="1.800" height="1.100" fill="#4a4238"/><rect x="2.6" y="9.8" width="1.800" height="1.100" fill="#4a4238"/><rect x="5.7" y="9.8" width="1.800" height="1.100" fill="#4a4238"/><rect x="8.8" y="9.8" width="1.800" height="1.100" fill="#4a4238"/><rect x="2.6" y="11.9" width="1.800" height="1.100" fill="#4a4238"/><rect x="5.7" y="11.9" width="1.800" height="1.100" fill="#4a4238"/><rect x="8.8" y="11.9" width="1.800" height="1.100" fill="#4a4238"/></svg>
<svg style="left:586px;top:51px;width:13px;height:15px" viewBox="0 0 13 15" ><rect x="0.500" y="0.500" width="12" height="14" rx="0.800" fill="#fff4e4" stroke="#8c8c8c"/><rect x="1" y="1" width="11" height="2.800" fill="#f0b464"/><path d="M2.500 2.300h1M5 2.300h1M7.500 2.300h1M10 2.300h0.800" stroke="#4a3a20" stroke-width="1"/><text x="6.600" y="12.600" font-family="Liberation Sans" font-weight="700" font-size="9.500" fill="#e23a22" text-anchor="middle" letter-spacing="-0.500">31</text></svg>
<svg style="left:609px;top:52px;width:15px;height:14px" viewBox="0 0 15 14" ><path d="M0.300 12v-2.600q0-2.600 3-2.600h2.600q2 0 2 2.600v2.600z" fill="#2f8fd4"/><path d="M3.800 6.800l1 2 1-2z" fill="#fff"/><circle cx="4.800" cy="3.600" r="3" fill="#1c1408"/><circle cx="4.800" cy="4.200" r="2.500" fill="#e89c34"/><path d="M8.900 8.400v-1.600q0-2.400 2.300-2.400t2.300 2.400v1.600" fill="none" stroke="#7a92ac" stroke-width="1.300"/><rect x="7.600" y="8" width="7" height="5.600" rx="0.800" fill="#e8eef6" stroke="#6a86a4" stroke-width="0.900"/><rect x="10.500" y="10" width="1.300" height="2.200" fill="#6a86a4"/></svg>
<span class="t b" style="top:51px;left:639.2px;font-size:13px;line-height:16px;color:#7a4a2a;top:52px;transform:scaleX(0.86);transform-origin:0 0;">M</span>
<span class="t b" style="top:51px;left:659.2px;font-size:13px;line-height:16px;color:#7a4a2a;top:52px;transform:scaleX(0.86);transform-origin:0 0;">M</span>
<span class="t b" style="top:51px;left:682.2px;font-size:13px;line-height:16px;color:#7a4a2a;top:52px;transform:scaleX(0.86);transform-origin:0 0;">M</span>
<div style="left:671px;top:56px;width:2px;height:6px;background:#7a4a2a;"></div>
<div style="left:669px;top:58px;width:6px;height:2px;background:#7a4a2a;"></div>
<div style="left:692px;top:58px;width:5px;height:2px;background:#7a4a2a;"></div>
<svg style="left:712px;top:51px;width:12px;height:16px" viewBox="0 0 12 16" ><path d="M3.200 0.800q-2.600 1.600-2.600 4.200q0 2.400 2.800 3.400v4.800q0 2.300 2.600 2.300t2.600-2.300v-4.800q2.800-1 2.800-3.400q0-2.600-2.600-4.200v4.200h-5.600z" fill="url(#gwr)" stroke="#7c7c7c" stroke-width="0.900"/><rect x="5.200" y="10.400" width="1.600" height="3.400" rx="0.800" fill="#f8f8f8" stroke="#8a8a8a" stroke-width="0.600"/></svg>
<svg style="left:732px;top:64px;width:7px;height:4px" viewBox="0 0 7 4"><path d="M0 0h7l-3.5 4z" fill="#3a2a00"/></svg>
<svg style="left:5px;top:101px;width:13px;height:15px" viewBox="0 0 13 15" ><path d="M0.500 0.500h8l3.500 3.500v10h-11.500z" fill="#fdfeff" stroke="#86a8c8"/><path d="M8.500 0.500v3.500h3.500" fill="#e4ecf6" stroke="#86a8c8" stroke-width="0.800"/><path d="M2.600 3v8h7" fill="none" stroke="#a04848" stroke-width="0.900"/><rect x="3.800" y="5" width="1.600" height="5.600" fill="#e83222"/><rect x="6.400" y="6.600" width="1.600" height="4" fill="#2c9c22"/><path d="M2.400 12.400h7" stroke="#9cc0e0" stroke-width="0.900"/></svg>
<svg style="left:276px;top:124px;width:13px;height:14px" viewBox="0 0 13 14" ><path d="M0.500 0.500h8l3.500 3.500v9.500h-11.500z" fill="#fdfeff" stroke="#86a8c8"/><path d="M8.500 0.500v3.500h3.500" fill="#e4ecf6" stroke="#86a8c8" stroke-width="0.800"/><path d="M2.600 2.600v7.400h7" fill="none" stroke="#a04848" stroke-width="0.900"/><rect x="3.800" y="4" width="1.600" height="5.600" fill="#e83222"/><rect x="6.600" y="5.600" width="1.600" height="4" fill="#2c9c22"/><path d="M2.400 11.600h7.400" stroke="#9cc0e0" stroke-width="0.900"/></svg>
<svg style="left:302px;top:123px;width:15px;height:15px" viewBox="0 0 15 15" ><path d="M0.300 0.500h10.600l-4.400 4.600v4.600l-2 2v-6.600z" fill="#a6a6a6" stroke="#6e6e6e" stroke-width="0.800"/><rect x="7.300" y="4" width="7.700" height="2" fill="#d39a60"/><rect x="7.300" y="7" width="7.700" height="2" fill="#2c9ad8"/><rect x="7.300" y="10" width="7.700" height="2" fill="#2c9ad8"/><rect x="7.300" y="13" width="7.700" height="2" fill="#d39a60"/></svg>
<svg style="left:325px;top:124px;width:16px;height:14px" viewBox="0 0 16 14" ><rect x="0.500" y="0.500" width="15" height="13" fill="#fbfaf2" stroke="#8e8e8e"/><rect x="2" y="2.200" width="12" height="1.700" fill="#1c1c9c"/><path d="M0 5.300h16" stroke="#111" stroke-width="1"/><path d="M0.500 8.200h15M0.500 10.800h15M5.500 6v7.500M10.500 6v7.500" stroke="#a4a4a4" stroke-width="1"/></svg>
<svg style="left:352px;top:123px;width:17px;height:15px" viewBox="0 0 17 15" ><rect x="4" y="0.500" width="9.600" height="9.600" fill="#fbfdff" stroke="#9cbcd8" stroke-width="0.900"/><path d="M5.6 2.600h6.400M5.6 4.200h6.400M5.6 5.800h6.400M5.6 7.400h4" stroke="#cdd8e4" stroke-width="0.800"/><path d="M0.500 6h6l-2 2 3.200 3.200-1.800 1.300-2.900-3-2.500 2.300z" fill="#2a9622" stroke="#1c7018" stroke-width="0.500"/><path d="M6.6 14.800l4.600-5.300 4.600 5.300z" fill="#edc848" stroke="#d8a820" stroke-width="0.700"/></svg>
<svg style="left:376px;top:123px;width:17px;height:15px" viewBox="0 0 17 15" ><rect x="3" y="0.500" width="9.600" height="9.600" fill="#fbfdff" stroke="#9cbcd8" stroke-width="0.900"/><path d="M4.6 2.600h6.400M4.6 4.200h6.400M4.6 5.800h6.400M4.6 7.400h4" stroke="#cdd8e4" stroke-width="0.800"/><path d="M0.6 14.800l4.600-5.300 4.600 5.300z" fill="#edc848" stroke="#d8a820" stroke-width="0.700"/><path d="M15 4l-0.200 7.600h-6l2.200-2.200-1.800-2 1.900-1.600 2 2z" fill="#2a9622" stroke="#1c7018" stroke-width="0.500"/></svg>
<svg style="left:529px;top:123px;width:16px;height:16px" viewBox="0 0 16 16" ><circle cx="8" cy="8" r="7.400" fill="url(#gin)" stroke="#a89a88" stroke-width="0.900"/><text x="8" y="11.800" font-family="Liberation Sans" font-weight="700" font-size="10.500" fill="#8a5a20" text-anchor="middle">?</text></svg>
</body></html>
